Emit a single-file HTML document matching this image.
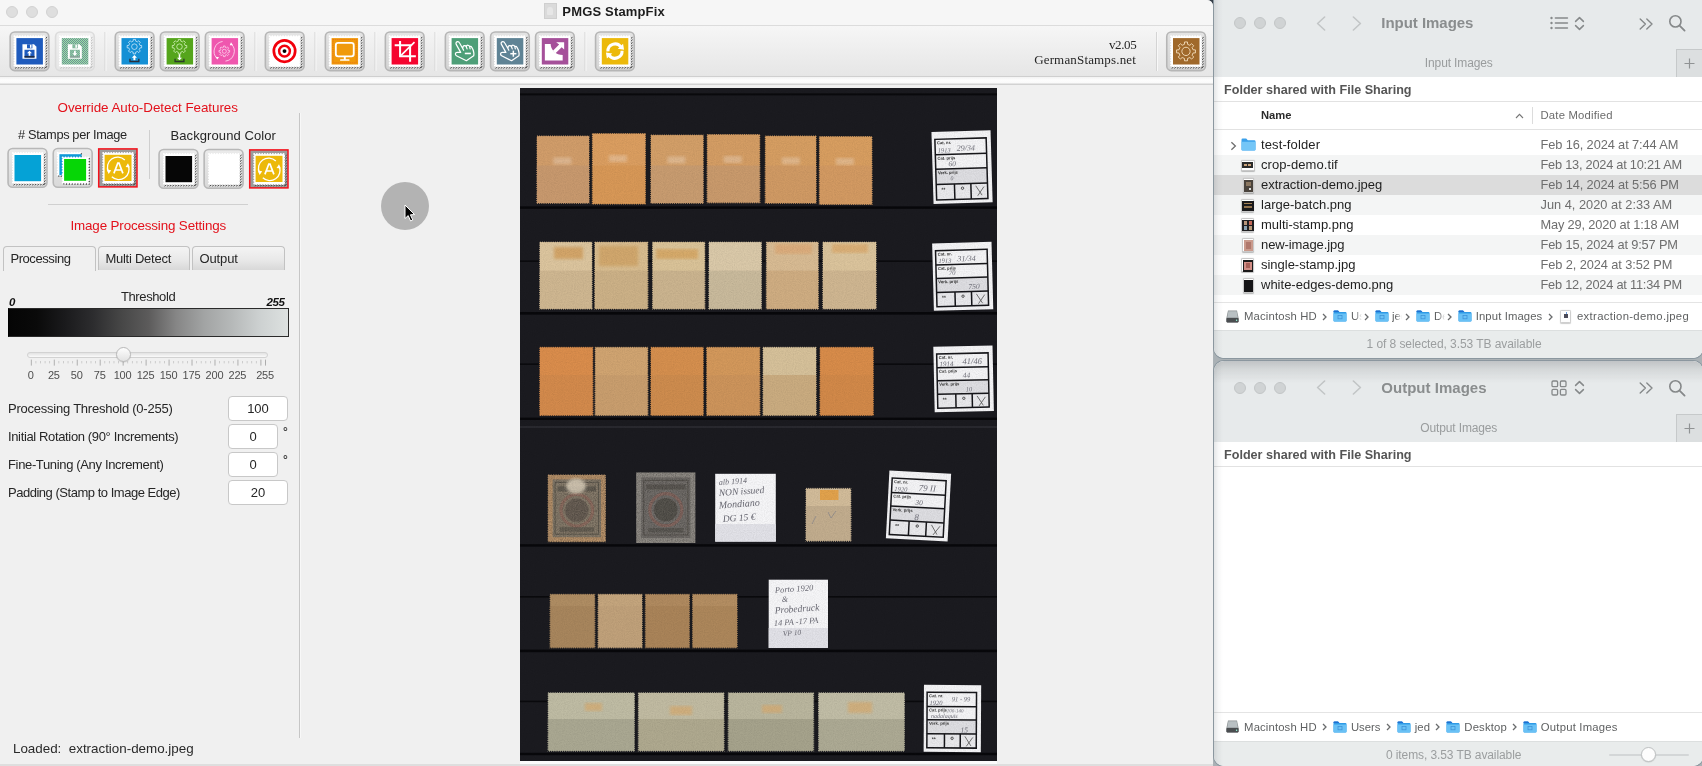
<!DOCTYPE html>
<html>
<head>
<meta charset="utf-8">
<title>PMGS StampFix</title>
<style>
*{box-sizing:border-box;margin:0;padding:0}
html,body{width:1702px;height:766px;overflow:hidden}
body{font-family:"Liberation Sans",sans-serif;font-size:13px;color:#262626;background:#aab1b5;position:relative}
.abs{position:absolute}
.t{position:absolute;white-space:nowrap;line-height:16px}
/* ---------- StampFix window ---------- */
#sf,.fw{will-change:transform}
#sf{position:absolute;left:0;top:0;width:1213px;height:766px;background:#f0f0f0;border-top-right-radius:6px;overflow:hidden}
#sf .titlebar{position:absolute;left:0;top:0;width:100%;height:26px;background:#f6f6f6;border-bottom:1px solid #dcdcdc}
.tl{position:absolute;width:12px;height:12px;border-radius:50%;background:#dedede;border:1px solid #d2d2d2}
#sf .toolbar{position:absolute;left:0;top:26px;width:100%;height:50px;background:linear-gradient(#f6f6f6,#ececec 60%,#e6e6e6)}
#sf .band{position:absolute;left:0;top:76px;width:100%;height:9px;background:linear-gradient(#cfcfcf 0,#cfcfcf 1px,#f2f2f2 1px,#fdfdfd 4px,#fafafa 7px,#d2d2d2 8px,#d2d2d2 9px)}
.tb{position:absolute;top:6px;width:40px;height:40px;border-radius:5px;border:1px solid #bdbdbd;background:linear-gradient(#efefef,#dcdcdc)}
.tb.dis{border-color:#dddddd;background:linear-gradient(#f3f3f3,#e8e8e8)}
.tb svg{position:absolute;left:3px;top:3px}
.sep{position:absolute;top:6px;width:1px;height:40px;background:#d6d6d6;box-shadow:1px 0 0 #fafafa}
.red{color:#e3111b}
.ob{position:absolute;width:40px;height:40px;border-radius:5px;border:1px solid #bdbdbd;background:linear-gradient(#efefef,#dcdcdc)}
.ob.sel{border-radius:0;border:2px solid #e8111b;background:#9a9a9a}
.ob svg{position:absolute;left:3px;top:3px}
.ob.sel svg{left:2px;top:2px}
.tab{position:absolute;top:246px;height:24px;border:1px solid #c2c2c2;border-bottom:none;border-radius:4px 4px 0 0;background:linear-gradient(#f4f4f4,#e9e9e9 55%,#d8d8d8);font-size:13px;line-height:24px;padding-left:6.4px;letter-spacing:-0.2px}
.tab.act{background:#f0f0f0;height:25px}
.inp{position:absolute;left:228px;height:25px;border:1px solid #c8c8c8;border-radius:4px;background:#fff;text-align:center;line-height:23px;font-size:13px}
.lbl{position:absolute;left:8px;white-space:nowrap;font-size:13px;line-height:16px;letter-spacing:-0.25px}
/* ---------- Finder ---------- */
.fw{position:absolute;left:1214px;width:488.6px;background:#fff;border-radius:10px;overflow:hidden;box-shadow:0 0 0 1px #8b979f}
.edge{position:absolute;left:0;top:0;width:9px;height:100%;background:linear-gradient(90deg,rgba(60,70,80,.13),rgba(60,70,80,.04) 50%,rgba(60,70,80,0))}
.fw .ftb{position:absolute;left:0;top:0;width:100%;background:#e7eaeb}
.ftl{position:absolute;width:12px;height:12px;border-radius:50%;background:#d0d3d4;border:1px solid #c3c6c7}
.ftitle{position:absolute;font-weight:bold;font-size:15px;color:#8a8d8e;white-space:nowrap;line-height:18px}
.fgray{color:#8e9192}
.row{position:absolute;left:0;width:100%;height:20px}
.row.alt{background:#f4f5f5}
.row.selr{background:#dcdcdc}
.fn{position:absolute;left:47px;top:2px;font-size:13px;line-height:16px;white-space:nowrap;color:#1f1f1f}
.fd{position:absolute;left:326.5px;top:2px;font-size:12.8px;line-height:16px;white-space:nowrap;color:#6e6e6e}
.pb{position:absolute;font-size:11.3px;color:#5f6162;white-space:nowrap;line-height:14px}
</style>
</head>
<body>
<div class="abs" style="left:1203px;top:0;width:12px;height:10px;background:#343e48"></div>

<!-- ================= StampFix window ================= -->
<div id="sf">
  <div class="titlebar">
    <div class="tl" style="left:6px;top:6px"></div>
    <div class="tl" style="left:26px;top:6px"></div>
    <div class="tl" style="left:46px;top:6px"></div>
    <div class="abs" style="left:544px;top:3.4px;width:13px;height:15.2px;background:#dadada;border:1px solid #cfcfcf"><div class="abs" style="left:2.4px;top:2.6px;width:6px;height:8px;border-radius:3px 3px 1px 1px;background:#e6e6e6"></div></div>
    <div class="t" style="left:562.3px;top:4.1px;font-weight:bold;font-size:13px;color:#1c1c1c;letter-spacing:0.17px">PMGS StampFix</div>
  </div>
  <div class="toolbar" id="toolbar">
    <svg class="abs" style="left:0;top:0" width="1213" height="50" viewBox="0 26 1213 50"><defs><linearGradient id="bg" x1="0" y1="0" x2="0" y2="1"><stop offset="0" stop-color="#e4e4e4"/><stop offset="1" stop-color="#d4d4d4"/></linearGradient><linearGradient id="bgd" x1="0" y1="0" x2="0" y2="1"><stop offset="0" stop-color="#f0f0f0"/><stop offset="1" stop-color="#e6e6e6"/></linearGradient><pattern id="dz" width="2" height="2" patternUnits="userSpaceOnUse" patternTransform="translate(0.1 -0.3)"><rect width="2" height="2" fill="#98e4a5"/><rect width="1" height="1" fill="#708c96"/><rect x="1" y="1" width="1" height="1" fill="#708c96"/></pattern></defs>
<g transform="translate(9.6 31.5)"><rect x="0.55" y="0.55" width="38.7" height="38.6" rx="4.6" fill="url(#bg)" stroke="#b6b6b6" stroke-width="1.6"/><g transform="translate(3.9 3.8)"><path d="M1.60 33.1 l1.9 -1.5 M32.0 3.50 l1.5 -1.9 M4.26 33.1 l1.9 -1.5 M32.0 6.16 l1.5 -1.9 M6.91 33.1 l1.9 -1.5 M32.0 8.81 l1.5 -1.9 M9.57 33.1 l1.9 -1.5 M32.0 11.47 l1.5 -1.9 M12.23 33.1 l1.9 -1.5 M32.0 14.13 l1.5 -1.9 M14.88 33.1 l1.9 -1.5 M32.0 16.79 l1.5 -1.9 M17.54 33.1 l1.9 -1.5 M32.0 19.44 l1.5 -1.9 M20.20 33.1 l1.9 -1.5 M32.0 22.10 l1.5 -1.9 M22.86 33.1 l1.9 -1.5 M32.0 24.76 l1.5 -1.9 M25.51 33.1 l1.9 -1.5 M32.0 27.41 l1.5 -1.9 M28.17 33.1 l1.9 -1.5 M32.0 30.07 l1.5 -1.9 M30.83 33.1 l1.9 -1.5 M32.0 32.73 l1.5 -1.9 " fill="none" stroke="#4a4a4a" stroke-width="1"/><rect x="1" y="1" width="30" height="30" fill="#fff" stroke="#fff" stroke-width="2" stroke-dasharray="0.01 2.657" stroke-linecap="round"/><rect x="2.9" y="2.8" width="26.5" height="26.4" fill="#1f5bbd"/><g transform="translate(15.9 15.9) scale(0.963) translate(-16.7 -16.7)"><path d="M9.5 9.5 H21.5 L24 12 V24.5 H9.5 Z" fill="#fff"/>
<rect x="14.2" y="9.5" width="5.6" height="4.2" fill="#1f5bbd"/><rect x="17.3" y="10" width="1.6" height="3.2" fill="#fff"/>
<rect x="11.6" y="15.2" width="10.4" height="8" fill="#1f5bbd"/>
<rect x="11.6" y="21.6" width="10.4" height="1.8" fill="#1d2a44"/>
<path d="M16.8 16.2 L19.4 18.9 H17.7 V21.3 H15.9 V18.9 H14.2 Z" fill="#fff"/></g></g></g>
<g transform="translate(55 31.5)"><rect x="0.55" y="0.55" width="38.7" height="38.6" rx="4.6" fill="url(#bgd)" stroke="#dcdcdc" stroke-width="1.6"/><g transform="translate(3.9 3.8)"><path d="M1.60 33.1 l1.9 -1.5 M32.0 3.50 l1.5 -1.9 M4.26 33.1 l1.9 -1.5 M32.0 6.16 l1.5 -1.9 M6.91 33.1 l1.9 -1.5 M32.0 8.81 l1.5 -1.9 M9.57 33.1 l1.9 -1.5 M32.0 11.47 l1.5 -1.9 M12.23 33.1 l1.9 -1.5 M32.0 14.13 l1.5 -1.9 M14.88 33.1 l1.9 -1.5 M32.0 16.79 l1.5 -1.9 M17.54 33.1 l1.9 -1.5 M32.0 19.44 l1.5 -1.9 M20.20 33.1 l1.9 -1.5 M32.0 22.10 l1.5 -1.9 M22.86 33.1 l1.9 -1.5 M32.0 24.76 l1.5 -1.9 M25.51 33.1 l1.9 -1.5 M32.0 27.41 l1.5 -1.9 M28.17 33.1 l1.9 -1.5 M32.0 30.07 l1.5 -1.9 M30.83 33.1 l1.9 -1.5 M32.0 32.73 l1.5 -1.9 " fill="none" stroke="#bcbcbc" stroke-width="1"/><rect x="1" y="1" width="30" height="30" fill="#fff" stroke="#fff" stroke-width="2" stroke-dasharray="0.01 2.657" stroke-linecap="round"/><rect x="2.9" y="2.8" width="26.5" height="26.4" fill="url(#dz)"/><g transform="translate(15.9 15.9) scale(0.963) translate(-16.7 -16.7)"><path d="M9.5 9.5 H21.5 L24 12 V24.5 H9.5 Z" fill="#fff"/>
<rect x="14.2" y="9.5" width="5.6" height="4.2" fill="url(#dz)"/><rect x="17.3" y="10" width="1.6" height="3.2" fill="#fff"/>
<rect x="11.6" y="15.2" width="10.4" height="8" fill="url(#dz)"/>
<rect x="11.6" y="21.6" width="10.4" height="1.8" fill="#8aa39a"/>
<path d="M16.8 21.6 L19.4 18.9 H17.7 V16.3 H15.9 V18.9 H14.2 Z" fill="#fff"/></g></g></g>
<g transform="translate(114.7 31.5)"><rect x="0.55" y="0.55" width="38.7" height="38.6" rx="4.6" fill="url(#bg)" stroke="#b6b6b6" stroke-width="1.6"/><g transform="translate(3.9 3.8)"><path d="M1.60 33.1 l1.9 -1.5 M32.0 3.50 l1.5 -1.9 M4.26 33.1 l1.9 -1.5 M32.0 6.16 l1.5 -1.9 M6.91 33.1 l1.9 -1.5 M32.0 8.81 l1.5 -1.9 M9.57 33.1 l1.9 -1.5 M32.0 11.47 l1.5 -1.9 M12.23 33.1 l1.9 -1.5 M32.0 14.13 l1.5 -1.9 M14.88 33.1 l1.9 -1.5 M32.0 16.79 l1.5 -1.9 M17.54 33.1 l1.9 -1.5 M32.0 19.44 l1.5 -1.9 M20.20 33.1 l1.9 -1.5 M32.0 22.10 l1.5 -1.9 M22.86 33.1 l1.9 -1.5 M32.0 24.76 l1.5 -1.9 M25.51 33.1 l1.9 -1.5 M32.0 27.41 l1.5 -1.9 M28.17 33.1 l1.9 -1.5 M32.0 30.07 l1.5 -1.9 M30.83 33.1 l1.9 -1.5 M32.0 32.73 l1.5 -1.9 " fill="none" stroke="#4a4a4a" stroke-width="1"/><rect x="1" y="1" width="30" height="30" fill="#fff" stroke="#fff" stroke-width="2" stroke-dasharray="0.01 2.657" stroke-linecap="round"/><rect x="2.9" y="2.8" width="26.5" height="26.4" fill="#1590d5"/><g transform="translate(15.9 15.9) scale(0.963) translate(-16.7 -16.7)"><path d="M15.31 6.24 L15.41 4.49 L17.79 4.49 L17.89 6.24 L19.76 7.02 L21.07 5.85 L22.75 7.53 L21.58 8.84 L22.36 10.71 L24.11 10.81 L24.11 13.19 L22.36 13.29 L21.58 15.16 L22.75 16.47 L21.07 18.15 L19.76 16.98 L17.89 17.76 L17.79 19.51 L15.41 19.51 L15.31 17.76 L13.44 16.98 L12.13 18.15 L10.45 16.47 L11.62 15.16 L10.84 13.29 L9.09 13.19 L9.09 10.81 L10.84 10.71 L11.62 8.84 L10.45 7.53 L12.13 5.85 L13.44 7.02 Z" fill="none" stroke="#e8f4ff" stroke-width="0.7"/><circle cx="16.6" cy="12" r="2.9" fill="none" stroke="#e8f4ff" stroke-width="0.7"/><path d="M16.6 20.6 L19.3 23.4 H17.6 V26 H15.6 V23.4 H13.9 Z" fill="#fff"/><path d="M12 24.6 V27.4 H21.2 V24.6" fill="none" stroke="#2b2f3a" stroke-width="1.4"/></g></g></g>
<g transform="translate(159.8 31.5)"><rect x="0.55" y="0.55" width="38.7" height="38.6" rx="4.6" fill="url(#bg)" stroke="#b6b6b6" stroke-width="1.6"/><g transform="translate(3.9 3.8)"><path d="M1.60 33.1 l1.9 -1.5 M32.0 3.50 l1.5 -1.9 M4.26 33.1 l1.9 -1.5 M32.0 6.16 l1.5 -1.9 M6.91 33.1 l1.9 -1.5 M32.0 8.81 l1.5 -1.9 M9.57 33.1 l1.9 -1.5 M32.0 11.47 l1.5 -1.9 M12.23 33.1 l1.9 -1.5 M32.0 14.13 l1.5 -1.9 M14.88 33.1 l1.9 -1.5 M32.0 16.79 l1.5 -1.9 M17.54 33.1 l1.9 -1.5 M32.0 19.44 l1.5 -1.9 M20.20 33.1 l1.9 -1.5 M32.0 22.10 l1.5 -1.9 M22.86 33.1 l1.9 -1.5 M32.0 24.76 l1.5 -1.9 M25.51 33.1 l1.9 -1.5 M32.0 27.41 l1.5 -1.9 M28.17 33.1 l1.9 -1.5 M32.0 30.07 l1.5 -1.9 M30.83 33.1 l1.9 -1.5 M32.0 32.73 l1.5 -1.9 " fill="none" stroke="#4a4a4a" stroke-width="1"/><rect x="1" y="1" width="30" height="30" fill="#fff" stroke="#fff" stroke-width="2" stroke-dasharray="0.01 2.657" stroke-linecap="round"/><rect x="2.9" y="2.8" width="26.5" height="26.4" fill="#55a51c"/><g transform="translate(15.9 15.9) scale(0.963) translate(-16.7 -16.7)"><path d="M15.31 6.24 L15.41 4.49 L17.79 4.49 L17.89 6.24 L19.76 7.02 L21.07 5.85 L22.75 7.53 L21.58 8.84 L22.36 10.71 L24.11 10.81 L24.11 13.19 L22.36 13.29 L21.58 15.16 L22.75 16.47 L21.07 18.15 L19.76 16.98 L17.89 17.76 L17.79 19.51 L15.41 19.51 L15.31 17.76 L13.44 16.98 L12.13 18.15 L10.45 16.47 L11.62 15.16 L10.84 13.29 L9.09 13.19 L9.09 10.81 L10.84 10.71 L11.62 8.84 L10.45 7.53 L12.13 5.85 L13.44 7.02 Z" fill="none" stroke="#eaffd8" stroke-width="0.7"/><circle cx="16.6" cy="12" r="2.9" fill="none" stroke="#eaffd8" stroke-width="0.7"/><path d="M16.6 26.2 L19.3 23.4 H17.4 V19.8 H15.8 V23.4 H13.9 Z" fill="#fff"/><path d="M12 24.6 V27.4 H21.2 V24.6" fill="none" stroke="#2b3a2b" stroke-width="1.4"/></g></g></g>
<g transform="translate(204.8 31.5)"><rect x="0.55" y="0.55" width="38.7" height="38.6" rx="4.6" fill="url(#bg)" stroke="#b6b6b6" stroke-width="1.6"/><g transform="translate(3.9 3.8)"><path d="M1.60 33.1 l1.9 -1.5 M32.0 3.50 l1.5 -1.9 M4.26 33.1 l1.9 -1.5 M32.0 6.16 l1.5 -1.9 M6.91 33.1 l1.9 -1.5 M32.0 8.81 l1.5 -1.9 M9.57 33.1 l1.9 -1.5 M32.0 11.47 l1.5 -1.9 M12.23 33.1 l1.9 -1.5 M32.0 14.13 l1.5 -1.9 M14.88 33.1 l1.9 -1.5 M32.0 16.79 l1.5 -1.9 M17.54 33.1 l1.9 -1.5 M32.0 19.44 l1.5 -1.9 M20.20 33.1 l1.9 -1.5 M32.0 22.10 l1.5 -1.9 M22.86 33.1 l1.9 -1.5 M32.0 24.76 l1.5 -1.9 M25.51 33.1 l1.9 -1.5 M32.0 27.41 l1.5 -1.9 M28.17 33.1 l1.9 -1.5 M32.0 30.07 l1.5 -1.9 M30.83 33.1 l1.9 -1.5 M32.0 32.73 l1.5 -1.9 " fill="none" stroke="#4a4a4a" stroke-width="1"/><rect x="1" y="1" width="30" height="30" fill="#fff" stroke="#fff" stroke-width="2" stroke-dasharray="0.01 2.657" stroke-linecap="round"/><rect x="2.9" y="2.8" width="26.5" height="26.4" fill="#ef57ae"/><g transform="translate(15.9 15.9) scale(0.963) translate(-16.7 -16.7)"><path d="M15.48 12.70 L15.52 11.27 L17.28 11.27 L17.32 12.70 L18.65 13.25 L19.69 12.27 L20.93 13.51 L19.95 14.55 L20.50 15.88 L21.93 15.92 L21.93 17.68 L20.50 17.72 L19.95 19.05 L20.93 20.09 L19.69 21.33 L18.65 20.35 L17.32 20.90 L17.28 22.33 L15.52 22.33 L15.48 20.90 L14.15 20.35 L13.11 21.33 L11.87 20.09 L12.85 19.05 L12.30 17.72 L10.87 17.68 L10.87 15.92 L12.30 15.88 L12.85 14.55 L11.87 13.51 L13.11 12.27 L14.15 13.25 Z" fill="none" stroke="#ffe6f6" stroke-width="0.7"/><circle cx="16.4" cy="16.8" r="2.1" fill="none" stroke="#ffe6f6" stroke-width="0.7"/><path d="M14.6 6.6 A10.4 10.4 0 0 0 8.6 24" fill="none" stroke="#ffe6f6" stroke-width="0.8"/><path d="M7.4 22.4 L9 25.4 L11 23 Z" fill="#fff"/><path d="M23.6 9.2 A10.4 10.4 0 0 1 17.6 27" fill="none" stroke="#ffe6f6" stroke-width="0.8"/><path d="M25.4 10.6 L23.4 7.4 L22 10.4 Z" fill="#fff"/></g></g></g>
<g transform="translate(264.8 31.5)"><rect x="0.55" y="0.55" width="38.7" height="38.6" rx="4.6" fill="url(#bg)" stroke="#b6b6b6" stroke-width="1.6"/><g transform="translate(3.9 3.8)"><path d="M1.60 33.1 l1.9 -1.5 M32.0 3.50 l1.5 -1.9 M4.26 33.1 l1.9 -1.5 M32.0 6.16 l1.5 -1.9 M6.91 33.1 l1.9 -1.5 M32.0 8.81 l1.5 -1.9 M9.57 33.1 l1.9 -1.5 M32.0 11.47 l1.5 -1.9 M12.23 33.1 l1.9 -1.5 M32.0 14.13 l1.5 -1.9 M14.88 33.1 l1.9 -1.5 M32.0 16.79 l1.5 -1.9 M17.54 33.1 l1.9 -1.5 M32.0 19.44 l1.5 -1.9 M20.20 33.1 l1.9 -1.5 M32.0 22.10 l1.5 -1.9 M22.86 33.1 l1.9 -1.5 M32.0 24.76 l1.5 -1.9 M25.51 33.1 l1.9 -1.5 M32.0 27.41 l1.5 -1.9 M28.17 33.1 l1.9 -1.5 M32.0 30.07 l1.5 -1.9 M30.83 33.1 l1.9 -1.5 M32.0 32.73 l1.5 -1.9 " fill="none" stroke="#4a4a4a" stroke-width="1"/><rect x="1" y="1" width="30" height="30" fill="#fff" stroke="#fff" stroke-width="2" stroke-dasharray="0.01 2.657" stroke-linecap="round"/><g transform="translate(15.9 15.9) scale(0.963) translate(-16.7 -16.7)"><circle cx="16.6" cy="16.6" r="11.1" fill="none" stroke="#f2000c" stroke-width="2.8"/><circle cx="16.6" cy="16.6" r="5.6" fill="none" stroke="#f2000c" stroke-width="2.6"/><circle cx="16.6" cy="16.6" r="2" fill="#000"/></g></g></g>
<g transform="translate(324.8 31.5)"><rect x="0.55" y="0.55" width="38.7" height="38.6" rx="4.6" fill="url(#bg)" stroke="#b6b6b6" stroke-width="1.6"/><g transform="translate(3.9 3.8)"><path d="M1.60 33.1 l1.9 -1.5 M32.0 3.50 l1.5 -1.9 M4.26 33.1 l1.9 -1.5 M32.0 6.16 l1.5 -1.9 M6.91 33.1 l1.9 -1.5 M32.0 8.81 l1.5 -1.9 M9.57 33.1 l1.9 -1.5 M32.0 11.47 l1.5 -1.9 M12.23 33.1 l1.9 -1.5 M32.0 14.13 l1.5 -1.9 M14.88 33.1 l1.9 -1.5 M32.0 16.79 l1.5 -1.9 M17.54 33.1 l1.9 -1.5 M32.0 19.44 l1.5 -1.9 M20.20 33.1 l1.9 -1.5 M32.0 22.10 l1.5 -1.9 M22.86 33.1 l1.9 -1.5 M32.0 24.76 l1.5 -1.9 M25.51 33.1 l1.9 -1.5 M32.0 27.41 l1.5 -1.9 M28.17 33.1 l1.9 -1.5 M32.0 30.07 l1.5 -1.9 M30.83 33.1 l1.9 -1.5 M32.0 32.73 l1.5 -1.9 " fill="none" stroke="#4a4a4a" stroke-width="1"/><rect x="1" y="1" width="30" height="30" fill="#fff" stroke="#fff" stroke-width="2" stroke-dasharray="0.01 2.657" stroke-linecap="round"/><rect x="2.9" y="2.8" width="26.5" height="26.4" fill="#f09a0b"/><g transform="translate(15.9 15.9) scale(0.963) translate(-16.7 -16.7)"><rect x="4.6" y="4.6" width="24.2" height="24.2" fill="none" stroke="#e8641a" stroke-width="0.8" stroke-dasharray="1 1"/><rect x="7.6" y="8" width="18.6" height="14" rx="2.4" fill="none" stroke="#fff" stroke-width="1.9"/><rect x="15.9" y="22.6" width="2" height="3" fill="#fff"/><rect x="12" y="25" width="9.8" height="1.7" rx="0.6" fill="#fff"/></g></g></g>
<g transform="translate(384.8 31.5)"><rect x="0.55" y="0.55" width="38.7" height="38.6" rx="4.6" fill="url(#bg)" stroke="#b6b6b6" stroke-width="1.6"/><g transform="translate(3.9 3.8)"><path d="M1.60 33.1 l1.9 -1.5 M32.0 3.50 l1.5 -1.9 M4.26 33.1 l1.9 -1.5 M32.0 6.16 l1.5 -1.9 M6.91 33.1 l1.9 -1.5 M32.0 8.81 l1.5 -1.9 M9.57 33.1 l1.9 -1.5 M32.0 11.47 l1.5 -1.9 M12.23 33.1 l1.9 -1.5 M32.0 14.13 l1.5 -1.9 M14.88 33.1 l1.9 -1.5 M32.0 16.79 l1.5 -1.9 M17.54 33.1 l1.9 -1.5 M32.0 19.44 l1.5 -1.9 M20.20 33.1 l1.9 -1.5 M32.0 22.10 l1.5 -1.9 M22.86 33.1 l1.9 -1.5 M32.0 24.76 l1.5 -1.9 M25.51 33.1 l1.9 -1.5 M32.0 27.41 l1.5 -1.9 M28.17 33.1 l1.9 -1.5 M32.0 30.07 l1.5 -1.9 M30.83 33.1 l1.9 -1.5 M32.0 32.73 l1.5 -1.9 " fill="none" stroke="#4a4a4a" stroke-width="1"/><rect x="1" y="1" width="30" height="30" fill="#fff" stroke="#fff" stroke-width="2" stroke-dasharray="0.01 2.657" stroke-linecap="round"/><rect x="2.9" y="2.8" width="26.5" height="26.4" fill="#f5052f"/><g transform="translate(15.9 15.9) scale(0.963) translate(-16.7 -16.7)"><path d="M12 6 V22 H28.4 M6.4 10.6 H22.4 V27.6" fill="none" stroke="#fff" stroke-width="2.1"/><path d="M13 21 L27 7.2" stroke="#fff" stroke-width="1.7"/></g></g></g>
<g transform="translate(444.8 31.5)"><rect x="0.55" y="0.55" width="38.7" height="38.6" rx="4.6" fill="url(#bg)" stroke="#b6b6b6" stroke-width="1.6"/><g transform="translate(3.9 3.8)"><path d="M1.60 33.1 l1.9 -1.5 M32.0 3.50 l1.5 -1.9 M4.26 33.1 l1.9 -1.5 M32.0 6.16 l1.5 -1.9 M6.91 33.1 l1.9 -1.5 M32.0 8.81 l1.5 -1.9 M9.57 33.1 l1.9 -1.5 M32.0 11.47 l1.5 -1.9 M12.23 33.1 l1.9 -1.5 M32.0 14.13 l1.5 -1.9 M14.88 33.1 l1.9 -1.5 M32.0 16.79 l1.5 -1.9 M17.54 33.1 l1.9 -1.5 M32.0 19.44 l1.5 -1.9 M20.20 33.1 l1.9 -1.5 M32.0 22.10 l1.5 -1.9 M22.86 33.1 l1.9 -1.5 M32.0 24.76 l1.5 -1.9 M25.51 33.1 l1.9 -1.5 M32.0 27.41 l1.5 -1.9 M28.17 33.1 l1.9 -1.5 M32.0 30.07 l1.5 -1.9 M30.83 33.1 l1.9 -1.5 M32.0 32.73 l1.5 -1.9 " fill="none" stroke="#4a4a4a" stroke-width="1"/><rect x="1" y="1" width="30" height="30" fill="#fff" stroke="#fff" stroke-width="2" stroke-dasharray="0.01 2.657" stroke-linecap="round"/><rect x="2.9" y="2.8" width="26.5" height="26.4" fill="#4e9f78"/><g transform="translate(15.9 15.9) scale(0.963) translate(-16.7 -16.7)"><g transform="translate(3.2 3.2) scale(1.0227)"><path d="M9.2 14.4 L4.7 6.3 C3.9 4.7 5.0 3.4 6.3 3.5 C7.1 3.6 7.7 4.1 8.1 4.9 L11.3 10.4 C11.3 8.6 11.9 7.7 13.0 7.6 C13.9 7.5 14.6 7.9 14.9 8.6 C15.2 7.5 16.0 7.0 16.9 7.2 C17.7 7.3 18.1 7.9 18.3 8.6 C18.9 8.0 19.9 8.2 20.4 9.0 C21.6 10.8 22.4 13.0 22.6 15.0 C22.7 16.2 22.6 17.2 22.4 17.9 L15.0 22.9 L4.9 17.8 C3.2 16.9 3.6 14.4 5.6 14.4 Z M14.9 8.6 L15.7 10.8 M18.3 8.6 L18.8 10.8 M11.3 10.4 L12.2 12.2" fill="none" stroke="#fff" stroke-width="1.25" stroke-linejoin="round" stroke-linecap="round"/><rect x="13.4" y="14.7" width="6.2" height="1.6" fill="#fff"/></g></g></g></g>
<g transform="translate(490 31.5)"><rect x="0.55" y="0.55" width="38.7" height="38.6" rx="4.6" fill="url(#bg)" stroke="#b6b6b6" stroke-width="1.6"/><g transform="translate(3.9 3.8)"><path d="M1.60 33.1 l1.9 -1.5 M32.0 3.50 l1.5 -1.9 M4.26 33.1 l1.9 -1.5 M32.0 6.16 l1.5 -1.9 M6.91 33.1 l1.9 -1.5 M32.0 8.81 l1.5 -1.9 M9.57 33.1 l1.9 -1.5 M32.0 11.47 l1.5 -1.9 M12.23 33.1 l1.9 -1.5 M32.0 14.13 l1.5 -1.9 M14.88 33.1 l1.9 -1.5 M32.0 16.79 l1.5 -1.9 M17.54 33.1 l1.9 -1.5 M32.0 19.44 l1.5 -1.9 M20.20 33.1 l1.9 -1.5 M32.0 22.10 l1.5 -1.9 M22.86 33.1 l1.9 -1.5 M32.0 24.76 l1.5 -1.9 M25.51 33.1 l1.9 -1.5 M32.0 27.41 l1.5 -1.9 M28.17 33.1 l1.9 -1.5 M32.0 30.07 l1.5 -1.9 M30.83 33.1 l1.9 -1.5 M32.0 32.73 l1.5 -1.9 " fill="none" stroke="#4a4a4a" stroke-width="1"/><rect x="1" y="1" width="30" height="30" fill="#fff" stroke="#fff" stroke-width="2" stroke-dasharray="0.01 2.657" stroke-linecap="round"/><rect x="2.9" y="2.8" width="26.5" height="26.4" fill="#5f8395"/><g transform="translate(15.9 15.9) scale(0.963) translate(-16.7 -16.7)"><g transform="translate(3.2 3.2) scale(1.0227)"><path d="M9.2 14.4 L4.7 6.3 C3.9 4.7 5.0 3.4 6.3 3.5 C7.1 3.6 7.7 4.1 8.1 4.9 L11.3 10.4 C11.3 8.6 11.9 7.7 13.0 7.6 C13.9 7.5 14.6 7.9 14.9 8.6 C15.2 7.5 16.0 7.0 16.9 7.2 C17.7 7.3 18.1 7.9 18.3 8.6 C18.9 8.0 19.9 8.2 20.4 9.0 C21.6 10.8 22.4 13.0 22.6 15.0 C22.7 16.2 22.6 17.2 22.4 17.9 L15.0 22.9 L4.9 17.8 C3.2 16.9 3.6 14.4 5.6 14.4 Z M14.9 8.6 L15.7 10.8 M18.3 8.6 L18.8 10.8 M11.3 10.4 L12.2 12.2" fill="none" stroke="#fff" stroke-width="1.25" stroke-linejoin="round" stroke-linecap="round"/><rect x="13.7" y="15" width="6.2" height="1.5" fill="#fff"/><rect x="16.05" y="12.6" width="1.5" height="6.2" fill="#fff"/></g></g></g></g>
<g transform="translate(535 31.5)"><rect x="0.55" y="0.55" width="38.7" height="38.6" rx="4.6" fill="url(#bg)" stroke="#b6b6b6" stroke-width="1.6"/><g transform="translate(3.9 3.8)"><path d="M1.60 33.1 l1.9 -1.5 M32.0 3.50 l1.5 -1.9 M4.26 33.1 l1.9 -1.5 M32.0 6.16 l1.5 -1.9 M6.91 33.1 l1.9 -1.5 M32.0 8.81 l1.5 -1.9 M9.57 33.1 l1.9 -1.5 M32.0 11.47 l1.5 -1.9 M12.23 33.1 l1.9 -1.5 M32.0 14.13 l1.5 -1.9 M14.88 33.1 l1.9 -1.5 M32.0 16.79 l1.5 -1.9 M17.54 33.1 l1.9 -1.5 M32.0 19.44 l1.5 -1.9 M20.20 33.1 l1.9 -1.5 M32.0 22.10 l1.5 -1.9 M22.86 33.1 l1.9 -1.5 M32.0 24.76 l1.5 -1.9 M25.51 33.1 l1.9 -1.5 M32.0 27.41 l1.5 -1.9 M28.17 33.1 l1.9 -1.5 M32.0 30.07 l1.5 -1.9 M30.83 33.1 l1.9 -1.5 M32.0 32.73 l1.5 -1.9 " fill="none" stroke="#4a4a4a" stroke-width="1"/><rect x="1" y="1" width="30" height="30" fill="#fff" stroke="#fff" stroke-width="2" stroke-dasharray="0.01 2.657" stroke-linecap="round"/><rect x="2.9" y="2.8" width="26.5" height="26.4" fill="#a5509a"/><g transform="translate(15.9 15.9) scale(0.963) translate(-16.7 -16.7)"><g transform="translate(3.2 3.2) scale(1.0227)"><path d="M3.1 5.9 H9.0 A12.2 11.2 0 0 0 21.2 17.0 V22.7 H3.1 Z" fill="#fff"/><path d="M14.6 4.0 H22.7 V11.6 L20.2 9.1 L13.9 15.4 L11.3 12.8 L17.6 6.5 Z" fill="#fff"/></g></g></g></g>
<g transform="translate(595 31.5)"><rect x="0.55" y="0.55" width="38.7" height="38.6" rx="4.6" fill="url(#bg)" stroke="#b6b6b6" stroke-width="1.6"/><g transform="translate(3.9 3.8)"><path d="M1.60 33.1 l1.9 -1.5 M32.0 3.50 l1.5 -1.9 M4.26 33.1 l1.9 -1.5 M32.0 6.16 l1.5 -1.9 M6.91 33.1 l1.9 -1.5 M32.0 8.81 l1.5 -1.9 M9.57 33.1 l1.9 -1.5 M32.0 11.47 l1.5 -1.9 M12.23 33.1 l1.9 -1.5 M32.0 14.13 l1.5 -1.9 M14.88 33.1 l1.9 -1.5 M32.0 16.79 l1.5 -1.9 M17.54 33.1 l1.9 -1.5 M32.0 19.44 l1.5 -1.9 M20.20 33.1 l1.9 -1.5 M32.0 22.10 l1.5 -1.9 M22.86 33.1 l1.9 -1.5 M32.0 24.76 l1.5 -1.9 M25.51 33.1 l1.9 -1.5 M32.0 27.41 l1.5 -1.9 M28.17 33.1 l1.9 -1.5 M32.0 30.07 l1.5 -1.9 M30.83 33.1 l1.9 -1.5 M32.0 32.73 l1.5 -1.9 " fill="none" stroke="#4a4a4a" stroke-width="1"/><rect x="1" y="1" width="30" height="30" fill="#fff" stroke="#fff" stroke-width="2" stroke-dasharray="0.01 2.657" stroke-linecap="round"/><rect x="2.9" y="2.8" width="26.5" height="26.4" fill="#ecb90a"/><g transform="translate(15.9 15.9) scale(0.963) translate(-16.7 -16.7)"><g transform="translate(3.2 3.2) scale(1.0227)"><path d="M6.2 13.4 A7.3 7.3 0 0 1 19.2 8.6" fill="none" stroke="#fff" stroke-width="3.1"/><path d="M20.6 12.8 A7.3 7.3 0 0 1 7.6 17.6" fill="none" stroke="#fff" stroke-width="3.1"/><path d="M16.2 10.6 L22.6 11.8 L21.6 5.6 Z" fill="#fff"/><path d="M10.6 15.6 L4.2 14.4 L5.2 20.6 Z" fill="#fff"/></g></g></g></g>
<g transform="translate(1166.2 31.5)"><rect x="0.55" y="0.55" width="38.7" height="38.6" rx="4.6" fill="url(#bg)" stroke="#b6b6b6" stroke-width="1.6"/><g transform="translate(3.9 3.8)"><path d="M1.60 33.1 l1.9 -1.5 M32.0 3.50 l1.5 -1.9 M4.26 33.1 l1.9 -1.5 M32.0 6.16 l1.5 -1.9 M6.91 33.1 l1.9 -1.5 M32.0 8.81 l1.5 -1.9 M9.57 33.1 l1.9 -1.5 M32.0 11.47 l1.5 -1.9 M12.23 33.1 l1.9 -1.5 M32.0 14.13 l1.5 -1.9 M14.88 33.1 l1.9 -1.5 M32.0 16.79 l1.5 -1.9 M17.54 33.1 l1.9 -1.5 M32.0 19.44 l1.5 -1.9 M20.20 33.1 l1.9 -1.5 M32.0 22.10 l1.5 -1.9 M22.86 33.1 l1.9 -1.5 M32.0 24.76 l1.5 -1.9 M25.51 33.1 l1.9 -1.5 M32.0 27.41 l1.5 -1.9 M28.17 33.1 l1.9 -1.5 M32.0 30.07 l1.5 -1.9 M30.83 33.1 l1.9 -1.5 M32.0 32.73 l1.5 -1.9 " fill="none" stroke="#4a4a4a" stroke-width="1"/><rect x="1" y="1" width="30" height="30" fill="#fff" stroke="#fff" stroke-width="2" stroke-dasharray="0.01 2.657" stroke-linecap="round"/><rect x="2.9" y="2.8" width="26.5" height="26.4" fill="#a0692b"/><g transform="translate(15.9 15.9) scale(0.963) translate(-16.7 -16.7)"><path d="M15.06 9.58 L15.15 7.12 L18.25 7.12 L18.34 9.58 L20.72 10.57 L22.52 8.89 L24.71 11.08 L23.03 12.88 L24.02 15.26 L26.48 15.35 L26.48 18.45 L24.02 18.54 L23.03 20.92 L24.71 22.72 L22.52 24.91 L20.72 23.23 L18.34 24.22 L18.25 26.68 L15.15 26.68 L15.06 24.22 L12.68 23.23 L10.88 24.91 L8.69 22.72 L10.37 20.92 L9.38 18.54 L6.92 18.45 L6.92 15.35 L9.38 15.26 L10.37 12.88 L8.69 11.08 L10.88 8.89 L12.68 10.57 Z" fill="none" stroke="#f7e3c4" stroke-width="0.9" stroke-linejoin="round"/><circle cx="16.7" cy="16.9" r="4.3" fill="none" stroke="#f7e3c4" stroke-width="0.9"/></g></g></g>
<rect x="104.5" y="32" width="1" height="39" fill="#d4d4d4"/><rect x="105.5" y="32" width="1" height="39" fill="#f8f8f8"/>
<rect x="254.5" y="32" width="1" height="39" fill="#d4d4d4"/><rect x="255.5" y="32" width="1" height="39" fill="#f8f8f8"/>
<rect x="314.5" y="32" width="1" height="39" fill="#d4d4d4"/><rect x="315.5" y="32" width="1" height="39" fill="#f8f8f8"/>
<rect x="374.5" y="32" width="1" height="39" fill="#d4d4d4"/><rect x="375.5" y="32" width="1" height="39" fill="#f8f8f8"/>
<rect x="434.5" y="32" width="1" height="39" fill="#d4d4d4"/><rect x="435.5" y="32" width="1" height="39" fill="#f8f8f8"/>
<rect x="584.5" y="32" width="1" height="39" fill="#d4d4d4"/><rect x="585.5" y="32" width="1" height="39" fill="#f8f8f8"/>
<rect x="1156" y="32" width="1" height="39" fill="#d4d4d4"/><rect x="1157" y="32" width="1" height="39" fill="#f8f8f8"/>
</svg>
<div class="t" style="right:76.6px;top:10.5px;font-family:'Liberation Serif',serif;font-size:13px;color:#262626;line-height:15px;letter-spacing:-0.35px">v2.05</div>
<div class="t" style="right:77px;top:26px;font-family:'Liberation Serif',serif;font-size:13px;color:#262626;line-height:15px;letter-spacing:0.16px">GermanStamps.net</div>

  </div>
  <div class="band"></div>

  <!-- left panel -->
  <div id="left">
    <div class="t red" style="left:57.5px;top:99.5px;font-size:13.4px;letter-spacing:-0.04px">Override Auto-Detect Features</div>
<div class="t" style="left:18px;top:126.5px;font-size:12.8px;letter-spacing:-0.36px">#&nbsp;Stamps per Image</div>
<div class="t" style="left:170.5px;top:127.5px;font-size:13px;letter-spacing:0.09px">Background Color</div>
<svg class="abs" style="left:0;top:140px" width="300" height="56" viewBox="0 140 300 56"><defs><linearGradient id="obg" x1="0" y1="0" x2="0" y2="1"><stop offset="0" stop-color="#ebebeb"/><stop offset="1" stop-color="#d9d9d9"/></linearGradient></defs>
<g transform="translate(7.5 148)"><rect x="0.55" y="0.55" width="38.9" height="38.7" rx="4.6" fill="url(#obg)" stroke="#b8b8b8" stroke-width="1.6"/><g transform="translate(4.4 4.1)"><path d="M1.60 33.1 l1.9 -1.5 M32.0 3.50 l1.5 -1.9 M4.26 33.1 l1.9 -1.5 M32.0 6.16 l1.5 -1.9 M6.91 33.1 l1.9 -1.5 M32.0 8.81 l1.5 -1.9 M9.57 33.1 l1.9 -1.5 M32.0 11.47 l1.5 -1.9 M12.23 33.1 l1.9 -1.5 M32.0 14.13 l1.5 -1.9 M14.88 33.1 l1.9 -1.5 M32.0 16.79 l1.5 -1.9 M17.54 33.1 l1.9 -1.5 M32.0 19.44 l1.5 -1.9 M20.20 33.1 l1.9 -1.5 M32.0 22.10 l1.5 -1.9 M22.86 33.1 l1.9 -1.5 M32.0 24.76 l1.5 -1.9 M25.51 33.1 l1.9 -1.5 M32.0 27.41 l1.5 -1.9 M28.17 33.1 l1.9 -1.5 M32.0 30.07 l1.5 -1.9 M30.83 33.1 l1.9 -1.5 M32.0 32.73 l1.5 -1.9 " fill="none" stroke="#4a4a4a" stroke-width="1"/><rect x="1" y="1" width="30" height="30" fill="#fff" stroke="#fff" stroke-width="2" stroke-dasharray="0.01 2.657" stroke-linecap="round"/><rect x="2.6" y="2.9" width="26.6" height="26.2" fill="#05a2d6"/></g></g>
<g transform="translate(52.7 148)"><rect x="0.55" y="0.55" width="38.9" height="38.7" rx="4.6" fill="url(#obg)" stroke="#b8b8b8" stroke-width="1.6"/><g transform="translate(4.4 4.1)"><g transform="translate(-0.4 0)"><rect x="2.1" y="1.7" width="22.4" height="22.4" fill="none" stroke="#484848" stroke-width="1.6" stroke-dasharray="0.01 2.8" stroke-linecap="round"/>
<rect x="1" y="0.6" width="22.4" height="22.4" fill="#fff" stroke="#fff" stroke-width="1.9" stroke-dasharray="0.01 2.8" stroke-linecap="round"/>
<rect x="2.7" y="2.1" width="22.2" height="21" fill="#0f9ad8"/>
<rect x="7.2" y="6.6" width="25.4" height="25.4" fill="none" stroke="#484848" stroke-width="1.6" stroke-dasharray="0.01 2.822" stroke-linecap="round"/>
<rect x="6" y="5.4" width="25.4" height="25.4" fill="#fff" stroke="#fff" stroke-width="2" stroke-dasharray="0.01 2.822" stroke-linecap="round"/>
<rect x="7.4" y="6.9" width="22" height="21.8" fill="#06d606"/></g></g></g>
<g transform="translate(97.8 148)"><rect x="0.9" y="0.9" width="38.3" height="38" fill="#9b9b9b" stroke="#f5111b" stroke-width="1.5"/><g transform="translate(4.4 4.1)"><path d="M1.60 33.1 l1.9 -1.5 M32.0 3.50 l1.5 -1.9 M4.26 33.1 l1.9 -1.5 M32.0 6.16 l1.5 -1.9 M6.91 33.1 l1.9 -1.5 M32.0 8.81 l1.5 -1.9 M9.57 33.1 l1.9 -1.5 M32.0 11.47 l1.5 -1.9 M12.23 33.1 l1.9 -1.5 M32.0 14.13 l1.5 -1.9 M14.88 33.1 l1.9 -1.5 M32.0 16.79 l1.5 -1.9 M17.54 33.1 l1.9 -1.5 M32.0 19.44 l1.5 -1.9 M20.20 33.1 l1.9 -1.5 M32.0 22.10 l1.5 -1.9 M22.86 33.1 l1.9 -1.5 M32.0 24.76 l1.5 -1.9 M25.51 33.1 l1.9 -1.5 M32.0 27.41 l1.5 -1.9 M28.17 33.1 l1.9 -1.5 M32.0 30.07 l1.5 -1.9 M30.83 33.1 l1.9 -1.5 M32.0 32.73 l1.5 -1.9 " fill="none" stroke="#4a4a4a" stroke-width="1"/><rect x="1" y="1" width="30" height="30" fill="#fff" stroke="#fff" stroke-width="2" stroke-dasharray="0.01 2.657" stroke-linecap="round"/><rect x="2.4" y="2.7" width="26.9" height="26.2" fill="#ecb90a"/><g transform="translate(-0.6 -0.7)"><path d="M6.9 20.4 A10.2 10.2 0 0 1 23.2 8.6" fill="none" stroke="#fff" stroke-width="1.3"/><path d="M26.6 14 A10.2 10.2 0 0 1 10.2 25.4" fill="none" stroke="#fff" stroke-width="1.3"/><path d="M5.2 18.2 L7 22.6 L9.6 18.8 Z" fill="#fff"/><path d="M28.3 16.2 L26.4 11.8 L24 15.6 Z" fill="#fff"/><path d="M12.3 22 L16.2 11.6 H17.4 L21.3 22 M13.8 18.6 H19.8" fill="none" stroke="#fff" stroke-width="1.7"/></g></g></g>
<g transform="translate(158.5 149)"><rect x="0.55" y="0.55" width="38.9" height="38.7" rx="4.6" fill="url(#obg)" stroke="#b8b8b8" stroke-width="1.6"/><g transform="translate(4.4 4.1)"><path d="M1.60 33.1 l1.9 -1.5 M32.0 3.50 l1.5 -1.9 M4.26 33.1 l1.9 -1.5 M32.0 6.16 l1.5 -1.9 M6.91 33.1 l1.9 -1.5 M32.0 8.81 l1.5 -1.9 M9.57 33.1 l1.9 -1.5 M32.0 11.47 l1.5 -1.9 M12.23 33.1 l1.9 -1.5 M32.0 14.13 l1.5 -1.9 M14.88 33.1 l1.9 -1.5 M32.0 16.79 l1.5 -1.9 M17.54 33.1 l1.9 -1.5 M32.0 19.44 l1.5 -1.9 M20.20 33.1 l1.9 -1.5 M32.0 22.10 l1.5 -1.9 M22.86 33.1 l1.9 -1.5 M32.0 24.76 l1.5 -1.9 M25.51 33.1 l1.9 -1.5 M32.0 27.41 l1.5 -1.9 M28.17 33.1 l1.9 -1.5 M32.0 30.07 l1.5 -1.9 M30.83 33.1 l1.9 -1.5 M32.0 32.73 l1.5 -1.9 " fill="none" stroke="#4a4a4a" stroke-width="1"/><rect x="1" y="1" width="30" height="30" fill="#fff" stroke="#fff" stroke-width="2" stroke-dasharray="0.01 2.657" stroke-linecap="round"/><rect x="2.6" y="2.9" width="26.6" height="26.2" fill="#060606"/></g></g>
<g transform="translate(203.6 149)"><rect x="0.55" y="0.55" width="38.9" height="38.7" rx="4.6" fill="url(#obg)" stroke="#b8b8b8" stroke-width="1.6"/><g transform="translate(4.4 4.1)"><path d="M1.60 33.1 l1.9 -1.5 M32.0 3.50 l1.5 -1.9 M4.26 33.1 l1.9 -1.5 M32.0 6.16 l1.5 -1.9 M6.91 33.1 l1.9 -1.5 M32.0 8.81 l1.5 -1.9 M9.57 33.1 l1.9 -1.5 M32.0 11.47 l1.5 -1.9 M12.23 33.1 l1.9 -1.5 M32.0 14.13 l1.5 -1.9 M14.88 33.1 l1.9 -1.5 M32.0 16.79 l1.5 -1.9 M17.54 33.1 l1.9 -1.5 M32.0 19.44 l1.5 -1.9 M20.20 33.1 l1.9 -1.5 M32.0 22.10 l1.5 -1.9 M22.86 33.1 l1.9 -1.5 M32.0 24.76 l1.5 -1.9 M25.51 33.1 l1.9 -1.5 M32.0 27.41 l1.5 -1.9 M28.17 33.1 l1.9 -1.5 M32.0 30.07 l1.5 -1.9 M30.83 33.1 l1.9 -1.5 M32.0 32.73 l1.5 -1.9 " fill="none" stroke="#4a4a4a" stroke-width="1"/><rect x="1" y="1" width="30" height="30" fill="#fff" stroke="#fff" stroke-width="2" stroke-dasharray="0.01 2.657" stroke-linecap="round"/><rect x="2.6" y="2.9" width="26.6" height="26.2" fill="#ffffff"/></g></g>
<g transform="translate(248.8 149)"><rect x="0.9" y="0.9" width="38.3" height="38" fill="#9b9b9b" stroke="#f5111b" stroke-width="1.5"/><g transform="translate(4.4 4.1)"><path d="M1.60 33.1 l1.9 -1.5 M32.0 3.50 l1.5 -1.9 M4.26 33.1 l1.9 -1.5 M32.0 6.16 l1.5 -1.9 M6.91 33.1 l1.9 -1.5 M32.0 8.81 l1.5 -1.9 M9.57 33.1 l1.9 -1.5 M32.0 11.47 l1.5 -1.9 M12.23 33.1 l1.9 -1.5 M32.0 14.13 l1.5 -1.9 M14.88 33.1 l1.9 -1.5 M32.0 16.79 l1.5 -1.9 M17.54 33.1 l1.9 -1.5 M32.0 19.44 l1.5 -1.9 M20.20 33.1 l1.9 -1.5 M32.0 22.10 l1.5 -1.9 M22.86 33.1 l1.9 -1.5 M32.0 24.76 l1.5 -1.9 M25.51 33.1 l1.9 -1.5 M32.0 27.41 l1.5 -1.9 M28.17 33.1 l1.9 -1.5 M32.0 30.07 l1.5 -1.9 M30.83 33.1 l1.9 -1.5 M32.0 32.73 l1.5 -1.9 " fill="none" stroke="#4a4a4a" stroke-width="1"/><rect x="1" y="1" width="30" height="30" fill="#fff" stroke="#fff" stroke-width="2" stroke-dasharray="0.01 2.657" stroke-linecap="round"/><rect x="2.4" y="2.7" width="26.9" height="26.2" fill="#ecb90a"/><g transform="translate(-0.6 -0.7)"><path d="M6.9 20.4 A10.2 10.2 0 0 1 23.2 8.6" fill="none" stroke="#fff" stroke-width="1.3"/><path d="M26.6 14 A10.2 10.2 0 0 1 10.2 25.4" fill="none" stroke="#fff" stroke-width="1.3"/><path d="M5.2 18.2 L7 22.6 L9.6 18.8 Z" fill="#fff"/><path d="M28.3 16.2 L26.4 11.8 L24 15.6 Z" fill="#fff"/><path d="M12.3 22 L16.2 11.6 H17.4 L21.3 22 M13.8 18.6 H19.8" fill="none" stroke="#fff" stroke-width="1.7"/></g></g></g>
</svg>
<div class="abs" style="left:149px;top:130px;width:1px;height:49px;background:#cfcfcf"></div>
<div class="abs" style="left:48px;top:204px;width:200px;height:1px;background:#d0d0d0"></div>
<div class="t red" style="left:70.5px;top:218px;font-size:13.4px;letter-spacing:-0.15px">Image Processing Settings</div>
<div class="tab act" style="left:3px;width:93px;letter-spacing:-0.42px">Processing</div>
<div class="tab" style="left:98px;width:92px;letter-spacing:-0.25px">Multi Detect</div>
<div class="tab" style="left:192px;width:93px;letter-spacing:-0.1px">Output</div>
<div class="t" style="left:121px;top:288.5px;font-size:13px;letter-spacing:-0.4px">Threshold</div>
<div class="t" style="left:9px;top:294px;font-size:11.5px;font-weight:bold;font-style:italic;color:#111;letter-spacing:-0.3px">0</div>
<div class="t" style="left:266.5px;top:294px;font-size:11.5px;font-weight:bold;font-style:italic;color:#111;letter-spacing:-0.4px">255</div>
<div class="abs" style="left:8px;top:308px;width:280.5px;height:29px;border:1px solid #2a2a2a;border-left-color:#000;background:linear-gradient(90deg,#050505 0%,#0a0a0a 10%,#1a1a1c 20%,#2c2c2e 30%,#464646 40%,#5c5b5b 50%,#868686 60%,#a2a4a4 70%,#b6b9b9 80%,#cdd1d1 90%,#dde1e0 100%)"></div>
<div class="abs" style="left:27px;top:351.5px;width:241px;height:6px;border-radius:3px;background:linear-gradient(#e2e2e2,#fafafa);border:1px solid #d2d2d2"></div>
<svg class="abs" style="left:0;top:358px" width="300" height="10" viewBox="0 0 300 10"><rect x="30.85" y="1.6" width="0.9" height="6" fill="#a8a8a8"/><rect x="35.49" y="3" width="0.8" height="2.4" fill="#c4c4c4"/><rect x="40.08" y="3" width="0.8" height="2.4" fill="#c4c4c4"/><rect x="44.68" y="3" width="0.8" height="2.4" fill="#c4c4c4"/><rect x="49.27" y="3" width="0.8" height="2.4" fill="#c4c4c4"/><rect x="53.81" y="1.6" width="0.9" height="6" fill="#a8a8a8"/><rect x="58.45" y="3" width="0.8" height="2.4" fill="#c4c4c4"/><rect x="63.04" y="3" width="0.8" height="2.4" fill="#c4c4c4"/><rect x="67.64" y="3" width="0.8" height="2.4" fill="#c4c4c4"/><rect x="72.23" y="3" width="0.8" height="2.4" fill="#c4c4c4"/><rect x="76.77" y="1.6" width="0.9" height="6" fill="#a8a8a8"/><rect x="81.41" y="3" width="0.8" height="2.4" fill="#c4c4c4"/><rect x="86.00" y="3" width="0.8" height="2.4" fill="#c4c4c4"/><rect x="90.60" y="3" width="0.8" height="2.4" fill="#c4c4c4"/><rect x="95.19" y="3" width="0.8" height="2.4" fill="#c4c4c4"/><rect x="99.73" y="1.6" width="0.9" height="6" fill="#a8a8a8"/><rect x="104.37" y="3" width="0.8" height="2.4" fill="#c4c4c4"/><rect x="108.96" y="3" width="0.8" height="2.4" fill="#c4c4c4"/><rect x="113.56" y="3" width="0.8" height="2.4" fill="#c4c4c4"/><rect x="118.15" y="3" width="0.8" height="2.4" fill="#c4c4c4"/><rect x="122.69" y="1.6" width="0.9" height="6" fill="#a8a8a8"/><rect x="127.33" y="3" width="0.8" height="2.4" fill="#c4c4c4"/><rect x="131.92" y="3" width="0.8" height="2.4" fill="#c4c4c4"/><rect x="136.52" y="3" width="0.8" height="2.4" fill="#c4c4c4"/><rect x="141.11" y="3" width="0.8" height="2.4" fill="#c4c4c4"/><rect x="145.65" y="1.6" width="0.9" height="6" fill="#a8a8a8"/><rect x="150.29" y="3" width="0.8" height="2.4" fill="#c4c4c4"/><rect x="154.88" y="3" width="0.8" height="2.4" fill="#c4c4c4"/><rect x="159.48" y="3" width="0.8" height="2.4" fill="#c4c4c4"/><rect x="164.07" y="3" width="0.8" height="2.4" fill="#c4c4c4"/><rect x="168.61" y="1.6" width="0.9" height="6" fill="#a8a8a8"/><rect x="173.25" y="3" width="0.8" height="2.4" fill="#c4c4c4"/><rect x="177.84" y="3" width="0.8" height="2.4" fill="#c4c4c4"/><rect x="182.44" y="3" width="0.8" height="2.4" fill="#c4c4c4"/><rect x="187.03" y="3" width="0.8" height="2.4" fill="#c4c4c4"/><rect x="191.57" y="1.6" width="0.9" height="6" fill="#a8a8a8"/><rect x="196.21" y="3" width="0.8" height="2.4" fill="#c4c4c4"/><rect x="200.80" y="3" width="0.8" height="2.4" fill="#c4c4c4"/><rect x="205.40" y="3" width="0.8" height="2.4" fill="#c4c4c4"/><rect x="209.99" y="3" width="0.8" height="2.4" fill="#c4c4c4"/><rect x="214.53" y="1.6" width="0.9" height="6" fill="#a8a8a8"/><rect x="219.17" y="3" width="0.8" height="2.4" fill="#c4c4c4"/><rect x="223.76" y="3" width="0.8" height="2.4" fill="#c4c4c4"/><rect x="228.36" y="3" width="0.8" height="2.4" fill="#c4c4c4"/><rect x="232.95" y="3" width="0.8" height="2.4" fill="#c4c4c4"/><rect x="237.49" y="1.6" width="0.9" height="6" fill="#a8a8a8"/><rect x="242.13" y="3" width="0.8" height="2.4" fill="#c4c4c4"/><rect x="246.72" y="3" width="0.8" height="2.4" fill="#c4c4c4"/><rect x="251.32" y="3" width="0.8" height="2.4" fill="#c4c4c4"/><rect x="255.91" y="3" width="0.8" height="2.4" fill="#c4c4c4"/><rect x="260.45" y="1.6" width="0.9" height="6" fill="#a8a8a8"/><rect x="265.09" y="3" width="0.8" height="2.4" fill="#c4c4c4"/><rect x="265.04" y="1.6" width="0.9" height="6" fill="#a8a8a8"/></svg>
<div class="abs" style="left:115.5px;top:347px;width:15px;height:15px;border-radius:50%;background:linear-gradient(#fdfdfd,#e2e2e2);border:1px solid #b9b9b9;box-shadow:0 0.5px 1px rgba(0,0,0,.15)"></div>
<div class="t" style="left:10.8px;top:367.5px;width:40px;text-align:center;font-size:11px;color:#4e4e4e;letter-spacing:-0.2px;line-height:14px">0</div>
<div class="t" style="left:33.8px;top:367.5px;width:40px;text-align:center;font-size:11px;color:#4e4e4e;letter-spacing:-0.2px;line-height:14px">25</div>
<div class="t" style="left:56.7px;top:367.5px;width:40px;text-align:center;font-size:11px;color:#4e4e4e;letter-spacing:-0.2px;line-height:14px">50</div>
<div class="t" style="left:79.7px;top:367.5px;width:40px;text-align:center;font-size:11px;color:#4e4e4e;letter-spacing:-0.2px;line-height:14px">75</div>
<div class="t" style="left:102.6px;top:367.5px;width:40px;text-align:center;font-size:11px;color:#4e4e4e;letter-spacing:-0.2px;line-height:14px">100</div>
<div class="t" style="left:125.6px;top:367.5px;width:40px;text-align:center;font-size:11px;color:#4e4e4e;letter-spacing:-0.2px;line-height:14px">125</div>
<div class="t" style="left:148.6px;top:367.5px;width:40px;text-align:center;font-size:11px;color:#4e4e4e;letter-spacing:-0.2px;line-height:14px">150</div>
<div class="t" style="left:171.5px;top:367.5px;width:40px;text-align:center;font-size:11px;color:#4e4e4e;letter-spacing:-0.2px;line-height:14px">175</div>
<div class="t" style="left:194.5px;top:367.5px;width:40px;text-align:center;font-size:11px;color:#4e4e4e;letter-spacing:-0.2px;line-height:14px">200</div>
<div class="t" style="left:217.4px;top:367.5px;width:40px;text-align:center;font-size:11px;color:#4e4e4e;letter-spacing:-0.2px;line-height:14px">225</div>
<div class="t" style="left:245.1px;top:367.5px;width:40px;text-align:center;font-size:11px;color:#4e4e4e;letter-spacing:-0.2px;line-height:14px">255</div>
<div class="lbl" style="top:401px;letter-spacing:-0.23px">Processing Threshold (0-255)</div>
<div class="inp" style="top:395.5px;width:60px">100</div>
<div class="lbl" style="top:429px;letter-spacing:-0.36px">Initial Rotation (90° Increments)</div>
<div class="inp" style="top:423.5px;width:50px">0</div>
<div class="lbl" style="top:457px;letter-spacing:-0.35px">Fine-Tuning (Any Increment)</div>
<div class="inp" style="top:451.5px;width:50px">0</div>
<div class="lbl" style="top:485px;letter-spacing:-0.48px">Padding (Stamp to Image Edge)</div>
<div class="inp" style="top:479.5px;width:60px">20</div>
<div class="t" style="left:283px;top:423.5px;font-size:12px;font-weight:bold;color:#444">°</div>
<div class="t" style="left:283px;top:451.5px;font-size:12px;font-weight:bold;color:#444">°</div>
<div class="abs" style="left:299px;top:113px;width:1px;height:625px;background:#c6c6c6;box-shadow:1px 0 0 #f8f8f8"></div>
<div class="t" style="left:13px;top:741px;font-size:13.4px;color:#2a2a2a;letter-spacing:-0.01px">Loaded:&nbsp; extraction-demo.jpeg</div>

  </div>

  <!-- image -->
  <div id="img" class="abs" style="left:520px;top:88px;width:477px;height:673px;background:#1b1b20;overflow:hidden">
    <svg class="abs" style="left:0;top:0" width="477" height="673" viewBox="0 0 477 673">
<defs><filter id="nz" x="0" y="0" width="100%" height="100%"><feTurbulence type="fractalNoise" baseFrequency="0.9" numOctaves="2" seed="3" result="n"/><feColorMatrix in="n" type="matrix" values="0 0 0 0 0  0 0 0 0 0  0 0 0 0 0  0.9 0.9 0.9 0 -1.05"/></filter><filter id="bl"><feGaussianBlur stdDeviation="0.6"/></filter><filter id="bl2"><feGaussianBlur stdDeviation="1.4"/></filter></defs>
<rect width="477" height="673" fill="#1b1b20"/>
<rect x="0.0" y="5.4" width="477.0" height="2.0" fill="#0a0a0d"/>
<rect x="0.0" y="118.4" width="477.0" height="2.4" fill="#08080b"/>
<rect x="0.0" y="172.4" width="477.0" height="1.6" fill="#0b0b0e"/>
<rect x="0.0" y="224.0" width="477.0" height="2.6" fill="#08080b"/>
<rect x="0.0" y="275.4" width="477.0" height="1.6" fill="#0b0b0e"/>
<rect x="0.0" y="329.6" width="477.0" height="2.4" fill="#08080b"/>
<rect x="0.0" y="338.4" width="477.0" height="1.2" fill="#34343a"/>
<rect x="0.0" y="456.2" width="477.0" height="2.4" fill="#08080b"/>
<rect x="0.0" y="508.0" width="477.0" height="1.6" fill="#0a0a0d"/>
<rect x="0.0" y="561.6" width="477.0" height="2.6" fill="#08080b"/>
<rect x="0.0" y="612.6" width="477.0" height="1.6" fill="#0a0a0d"/>
<rect x="0.0" y="664.8" width="477.0" height="2.4" fill="#08080b"/>
<g><rect x="16.4" y="47.4" width="53.3" height="68.4" fill="#d19d6a"/><rect x="16.4" y="77.5" width="53.3" height="38.3" fill="#c8996e"/><rect x="33.4" y="69.4" width="18.0" height="7.0" fill="#eed8c2" opacity="0.42" filter="url(#bl2)"/><rect x="16.4" y="47.4" width="53.3" height="68.4" fill="none" stroke="#1b1b20" stroke-width="1.5" stroke-dasharray="0.01 2.15" stroke-linecap="round"/></g>
<g><rect x="71.9" y="45.1" width="54.1" height="71.3" fill="#db9e60"/><rect x="71.9" y="77.5" width="54.1" height="38.9" fill="#d89857"/><rect x="88.9" y="67.1" width="18.0" height="7.0" fill="#eed8c2" opacity="0.42" filter="url(#bl2)"/><rect x="71.9" y="45.1" width="54.1" height="71.3" fill="none" stroke="#1b1b20" stroke-width="1.5" stroke-dasharray="0.01 2.15" stroke-linecap="round"/></g>
<g><rect x="130.3" y="46.5" width="53.6" height="69.3" fill="#d39f68"/><rect x="130.3" y="77.5" width="53.6" height="38.3" fill="#c89c70"/><rect x="147.3" y="68.5" width="18.0" height="7.0" fill="#eed8c2" opacity="0.42" filter="url(#bl2)"/><rect x="130.3" y="46.5" width="53.6" height="69.3" fill="none" stroke="#1b1b20" stroke-width="1.5" stroke-dasharray="0.01 2.15" stroke-linecap="round"/></g>
<g><rect x="186.7" y="46.0" width="53.6" height="69.2" fill="#d49d64"/><rect x="186.7" y="77.5" width="53.6" height="37.7" fill="#c99a6c"/><rect x="203.7" y="68.0" width="18.0" height="7.0" fill="#eed8c2" opacity="0.42" filter="url(#bl2)"/><rect x="186.7" y="46.0" width="53.6" height="69.2" fill="none" stroke="#1b1b20" stroke-width="1.5" stroke-dasharray="0.01 2.15" stroke-linecap="round"/></g>
<g><rect x="244.8" y="47.4" width="51.9" height="68.4" fill="#d69e62"/><rect x="244.8" y="77.5" width="51.9" height="38.3" fill="#d09a64"/><rect x="261.8" y="69.4" width="18.0" height="7.0" fill="#eed8c2" opacity="0.42" filter="url(#bl2)"/><rect x="244.8" y="47.4" width="51.9" height="68.4" fill="none" stroke="#1b1b20" stroke-width="1.5" stroke-dasharray="0.01 2.15" stroke-linecap="round"/></g>
<g><rect x="298.9" y="48.0" width="53.6" height="69.0" fill="#d89e60"/><rect x="298.9" y="77.5" width="53.6" height="39.5" fill="#d39a62"/><rect x="315.9" y="70.0" width="18.0" height="7.0" fill="#eed8c2" opacity="0.42" filter="url(#bl2)"/><rect x="298.9" y="48.0" width="53.6" height="69.0" fill="none" stroke="#1b1b20" stroke-width="1.5" stroke-dasharray="0.01 2.15" stroke-linecap="round"/></g>
<g><rect x="19.2" y="153.6" width="53.3" height="67.8" fill="#dcc59e"/><rect x="19.2" y="182.6" width="53.3" height="38.8" fill="#cfb791"/><rect x="34.0" y="159.0" width="29.0" height="12.0" fill="#d2a060" opacity="0.85" filter="url(#bl2)"/><rect x="19.2" y="153.6" width="53.3" height="67.8" fill="none" stroke="#1b1b20" stroke-width="1.5" stroke-dasharray="0.01 2.15" stroke-linecap="round"/></g>
<g><rect x="74.2" y="153.6" width="54.1" height="67.8" fill="#d8bc8f"/><rect x="74.2" y="182.6" width="54.1" height="38.8" fill="#ccb187"/><rect x="79.0" y="158.0" width="39.0" height="20.0" fill="#d0a468" opacity="0.85" filter="url(#bl2)"/><rect x="74.2" y="153.6" width="54.1" height="67.8" fill="none" stroke="#1b1b20" stroke-width="1.5" stroke-dasharray="0.01 2.15" stroke-linecap="round"/></g>
<g><rect x="132.0" y="153.6" width="53.3" height="67.8" fill="#dac398"/><rect x="132.0" y="182.6" width="53.3" height="38.8" fill="#cbb48f"/><rect x="136.0" y="161.0" width="42.0" height="10.0" fill="#d6a664" opacity="0.85" filter="url(#bl2)"/><rect x="132.0" y="153.6" width="53.3" height="67.8" fill="none" stroke="#1b1b20" stroke-width="1.5" stroke-dasharray="0.01 2.15" stroke-linecap="round"/></g>
<g><rect x="188.4" y="153.6" width="53.6" height="67.8" fill="#dac9a9"/><rect x="188.4" y="182.6" width="53.6" height="38.8" fill="#c9ba9c"/><rect x="188.4" y="153.6" width="53.6" height="67.8" fill="none" stroke="#1b1b20" stroke-width="1.5" stroke-dasharray="0.01 2.15" stroke-linecap="round"/></g>
<g><rect x="245.9" y="153.6" width="53.0" height="67.8" fill="#d8bb93"/><rect x="245.9" y="182.6" width="53.0" height="38.8" fill="#cfad82"/><rect x="255.0" y="156.0" width="37.0" height="10.0" fill="#dcaa78" opacity="0.85" filter="url(#bl2)"/><rect x="245.9" y="153.6" width="53.0" height="67.8" fill="none" stroke="#1b1b20" stroke-width="1.5" stroke-dasharray="0.01 2.15" stroke-linecap="round"/></g>
<g><rect x="302.3" y="153.6" width="54.4" height="67.8" fill="#dbc49c"/><rect x="302.3" y="182.6" width="54.4" height="38.8" fill="#cfb691"/><rect x="312.0" y="156.0" width="36.0" height="9.0" fill="#daac70" opacity="0.85" filter="url(#bl2)"/><rect x="302.3" y="153.6" width="54.4" height="67.8" fill="none" stroke="#1b1b20" stroke-width="1.5" stroke-dasharray="0.01 2.15" stroke-linecap="round"/></g>
<g><rect x="19.2" y="258.8" width="54.1" height="69.2" fill="#da8d4c"/><rect x="19.2" y="287.0" width="54.1" height="41.0" fill="#d38a4c"/><rect x="19.2" y="258.8" width="54.1" height="69.2" fill="none" stroke="#1b1b20" stroke-width="1.5" stroke-dasharray="0.01 2.15" stroke-linecap="round"/></g>
<g><rect x="74.7" y="258.8" width="53.6" height="69.2" fill="#d0a471"/><rect x="74.7" y="287.0" width="53.6" height="41.0" fill="#c99e6e"/><rect x="74.7" y="258.8" width="53.6" height="69.2" fill="none" stroke="#1b1b20" stroke-width="1.5" stroke-dasharray="0.01 2.15" stroke-linecap="round"/></g>
<g><rect x="130.3" y="258.8" width="53.6" height="69.2" fill="#d58f4e"/><rect x="130.3" y="287.0" width="53.6" height="41.0" fill="#ce8c4e"/><rect x="130.3" y="258.8" width="53.6" height="69.2" fill="none" stroke="#1b1b20" stroke-width="1.5" stroke-dasharray="0.01 2.15" stroke-linecap="round"/></g>
<g><rect x="186.1" y="258.8" width="54.2" height="69.2" fill="#d3985b"/><rect x="186.1" y="287.0" width="54.2" height="41.0" fill="#cd945b"/><rect x="186.1" y="258.8" width="54.2" height="69.2" fill="none" stroke="#1b1b20" stroke-width="1.5" stroke-dasharray="0.01 2.15" stroke-linecap="round"/></g>
<g><rect x="242.5" y="258.8" width="54.2" height="69.2" fill="#d6c19a"/><rect x="242.5" y="287.0" width="54.2" height="41.0" fill="#caac80"/><rect x="242.5" y="258.8" width="54.2" height="69.2" fill="none" stroke="#1b1b20" stroke-width="1.5" stroke-dasharray="0.01 2.15" stroke-linecap="round"/></g>
<g><rect x="299.5" y="258.8" width="54.4" height="69.2" fill="#d88c4a"/><rect x="299.5" y="287.0" width="54.4" height="41.0" fill="#d28949"/><rect x="299.5" y="258.8" width="54.4" height="69.2" fill="none" stroke="#1b1b20" stroke-width="1.5" stroke-dasharray="0.01 2.15" stroke-linecap="round"/></g>
<g><rect x="27.6" y="386.4" width="58.4" height="67.8" fill="#b6916a"/><rect x="32.6" y="391.4" width="48.4" height="57.8" fill="#857a6a"/><rect x="35.1" y="394.4" width="43.4" height="51.8" fill="none" stroke="#4a463f" stroke-width="1" opacity=".6"/><ellipse cx="56.8" cy="422.3" rx="15.8" ry="15.8" fill="none" stroke="#94645a" stroke-width="3.2" opacity=".55"/><ellipse cx="56.8" cy="422.3" rx="11.7" ry="11.7" fill="#6a6056" filter="url(#bl)"/><rect x="37.6" y="398.4" width="38.4" height="5" fill="#4a4640" opacity=".5"/><rect x="39.6" y="439.2" width="34.4" height="4.5" fill="#4a4640" opacity=".45"/><rect x="27.6" y="386.4" width="58.4" height="67.8" fill="#000" filter="url(#nz)" opacity=".22"/><rect x="27.6" y="386.4" width="58.4" height="67.8" fill="none" stroke="#1b1b20" stroke-width="1.3" stroke-dasharray="0.01 2.4" stroke-linecap="round"/></g>
<ellipse cx="56.0" cy="398.0" rx="10" ry="7.5" fill="#d8ccb8" opacity=".85" filter="url(#bl2)"/>
<g><rect x="116.2" y="384.4" width="59.2" height="70.6" fill="#8e8a84"/><rect x="121.2" y="389.4" width="49.2" height="60.6" fill="#726e6a"/><rect x="123.7" y="392.4" width="44.2" height="54.6" fill="none" stroke="#4a463f" stroke-width="1" opacity=".6"/><ellipse cx="145.8" cy="421.7" rx="16.0" ry="16.0" fill="none" stroke="#94645a" stroke-width="3.2" opacity=".55"/><ellipse cx="145.8" cy="421.7" rx="11.8" ry="11.8" fill="#59544f" filter="url(#bl)"/><rect x="126.2" y="396.4" width="39.2" height="5" fill="#4a4640" opacity=".5"/><rect x="128.2" y="440.0" width="35.2" height="4.5" fill="#4a4640" opacity=".45"/><rect x="116.2" y="384.4" width="59.2" height="70.6" fill="#000" filter="url(#nz)" opacity=".22"/></g>
<g transform="rotate(0 225.5 419.7)"><rect x="195.2" y="385.8" width="60.6" height="67.8" fill="#f6f6f8"/><rect x="195.2" y="436.0" width="60.6" height="17.6" fill="#e2e2e8"/><text x="199.0" y="397.0" font-family="Liberation Serif" font-style="italic" font-size="8" fill="#6a6a74" transform="rotate(-4 199.0 397.0)">alb 1914</text><text x="199.0" y="408.0" font-family="Liberation Serif" font-style="italic" font-size="9.5" fill="#6a6a74" transform="rotate(-4 199.0 408.0)">NON issued</text><text x="199.0" y="420.5" font-family="Liberation Serif" font-style="italic" font-size="10" fill="#6a6a74" transform="rotate(-4 199.0 420.5)">Mondiano</text><text x="203.0" y="434.0" font-family="Liberation Serif" font-style="italic" font-size="9.5" fill="#6a6a74" transform="rotate(-4 203.0 434.0)">DG 15 €</text></g>
<g><rect x="285.4" y="399.9" width="46.0" height="53.7" fill="#d2bc9a"/><rect x="285.4" y="418.0" width="46.0" height="35.6" fill="#c2ad8e"/><rect x="300.0" y="402.0" width="18.5" height="10.0" fill="#e2a24c" opacity="1"/><path d="M292.0 436.0 l4 -8 M308.0 424.0 l3 6 l5 -7" stroke="#8e8a8c" stroke-width=".8" fill="none"/><rect x="285.4" y="399.9" width="46.0" height="53.7" fill="none" stroke="#1b1b20" stroke-width="1.5" stroke-dasharray="0.01 2.15" stroke-linecap="round"/></g>
<g><rect x="29.6" y="505.8" width="45.7" height="54.4" fill="#af8d63"/><rect x="29.6" y="518.0" width="45.7" height="42.2" fill="#a8865d"/><rect x="29.6" y="505.8" width="45.7" height="54.4" fill="none" stroke="#1b1b20" stroke-width="1.5" stroke-dasharray="0.01 2.15" stroke-linecap="round"/></g>
<g><rect x="77.6" y="505.8" width="45.1" height="54.4" fill="#c4a57d"/><rect x="77.6" y="518.0" width="45.1" height="42.2" fill="#c0a17a"/><rect x="77.6" y="505.8" width="45.1" height="54.4" fill="none" stroke="#1b1b20" stroke-width="1.5" stroke-dasharray="0.01 2.15" stroke-linecap="round"/></g>
<g><rect x="124.9" y="505.8" width="45.1" height="54.4" fill="#b08a5f"/><rect x="124.9" y="518.0" width="45.1" height="42.2" fill="#aa8459"/><rect x="124.9" y="505.8" width="45.1" height="54.4" fill="none" stroke="#1b1b20" stroke-width="1.5" stroke-dasharray="0.01 2.15" stroke-linecap="round"/></g>
<g><rect x="172.0" y="505.8" width="45.7" height="54.4" fill="#b48e62"/><rect x="172.0" y="518.0" width="45.7" height="42.2" fill="#ad875b"/><rect x="172.0" y="505.8" width="45.7" height="54.4" fill="none" stroke="#1b1b20" stroke-width="1.5" stroke-dasharray="0.01 2.15" stroke-linecap="round"/></g>
<g transform="rotate(0 278.4 525.9)"><rect x="248.7" y="491.7" width="59.3" height="68.3" fill="#f6f6f8"/><rect x="248.7" y="540.0" width="59.3" height="20.0" fill="#e2e2e8"/><text x="255.0" y="505.0" font-family="Liberation Serif" font-style="italic" font-size="8.5" fill="#6a6a74" transform="rotate(-4 255.0 505.0)">Porto 1920</text><text x="262.0" y="514.0" font-family="Liberation Serif" font-style="italic" font-size="8" fill="#6a6a74" transform="rotate(-4 262.0 514.0)">&amp;</text><text x="255.0" y="525.5" font-family="Liberation Serif" font-style="italic" font-size="9.5" fill="#6a6a74" transform="rotate(-4 255.0 525.5)">Probedruck</text><text x="254.0" y="538.0" font-family="Liberation Serif" font-style="italic" font-size="8.5" fill="#6a6a74" transform="rotate(-4 254.0 538.0)">14 PA -17 PA</text><text x="263.0" y="548.0" font-family="Liberation Serif" font-style="italic" font-size="7.5" fill="#6a6a74" transform="rotate(-4 263.0 548.0)">VP 10</text></g>
<g><rect x="27.6" y="604.2" width="87.4" height="59.3" fill="#bfbca4"/><rect x="27.6" y="631.0" width="87.4" height="32.5" fill="#aaa892"/><rect x="65.0" y="615.0" width="17.0" height="8.0" fill="#d6ac72" opacity="0.75" filter="url(#bl2)"/><rect x="27.6" y="604.2" width="87.4" height="59.3" fill="none" stroke="#1b1b20" stroke-width="1.5" stroke-dasharray="0.01 2.15" stroke-linecap="round"/></g>
<g><rect x="117.9" y="604.2" width="86.6" height="59.3" fill="#c1bba2"/><rect x="117.9" y="631.0" width="86.6" height="32.5" fill="#afa98f"/><rect x="150.0" y="618.0" width="22.0" height="9.0" fill="#d6ac72" opacity="0.75" filter="url(#bl2)"/><rect x="117.9" y="604.2" width="86.6" height="59.3" fill="none" stroke="#1b1b20" stroke-width="1.5" stroke-dasharray="0.01 2.15" stroke-linecap="round"/></g>
<g><rect x="207.8" y="604.2" width="86.3" height="59.3" fill="#bab69e"/><rect x="207.8" y="631.0" width="86.3" height="32.5" fill="#a6a38c"/><rect x="242.0" y="617.0" width="20.0" height="8.0" fill="#d6ac72" opacity="0.75" filter="url(#bl2)"/><rect x="207.8" y="604.2" width="86.3" height="59.3" fill="none" stroke="#1b1b20" stroke-width="1.5" stroke-dasharray="0.01 2.15" stroke-linecap="round"/></g>
<g><rect x="298.0" y="604.2" width="87.0" height="59.3" fill="#c1bda6"/><rect x="298.0" y="631.0" width="87.0" height="32.5" fill="#adaa94"/><rect x="328.0" y="614.0" width="24.0" height="11.0" fill="#d6ac72" opacity="0.75" filter="url(#bl2)"/><rect x="298.0" y="604.2" width="87.0" height="59.3" fill="none" stroke="#1b1b20" stroke-width="1.5" stroke-dasharray="0.01 2.15" stroke-linecap="round"/></g>
<g transform="rotate(-1.7 442.1 79.2)"><rect x="412.5" y="43.2" width="59.1" height="72.0" fill="#f4f4f6"/><rect x="415.7" y="80.6" width="51.3" height="15.2" fill="#dedee2"/><rect x="415.7" y="95.7" width="51.3" height="15.5" fill="#e9e9ec"/><rect x="415.7" y="50.6" width="51.3" height="60.6" fill="none" stroke="#16161a" stroke-width="1.5"/><rect x="415.7" y="65.3" width="51.3" height="1.5" fill="#16161a"/><rect x="415.7" y="79.8" width="51.3" height="1.5" fill="#16161a"/><rect x="415.7" y="95.0" width="51.3" height="1.5" fill="#16161a"/><rect x="433.2" y="95.7" width="1.5" height="15.5" fill="#16161a"/><rect x="449.6" y="95.7" width="1.5" height="15.5" fill="#16161a"/><text x="417.7" y="55.6" font-family="Liberation Sans" font-weight="bold" font-size="4.2" fill="#333">Cat. nr.</text><text x="417.7" y="71.1" font-family="Liberation Sans" font-weight="bold" font-size="4.2" fill="#333">Cat. prijs</text><text x="417.7" y="85.6" font-family="Liberation Sans" font-weight="bold" font-size="4.2" fill="#333">Verk. prijs</text><text x="420.8" y="102.7" font-family="Liberation Sans" font-weight="bold" font-size="5" fill="#333">**</text><circle cx="441.9" cy="100.2" r="1.2" fill="none" stroke="#333" stroke-width=".8"/><path d="M455.2 98.2 l6 9.5 M463.4 99.2 l-6.5 9" stroke="#555" stroke-width=".8"/><text x="418.3" y="63.9" font-family="Liberation Serif" font-style="italic" font-size="6.5" fill="#70707a">1913</text><text x="437.2" y="62.7" font-family="Liberation Serif" font-style="italic" font-size="8" fill="#70707a">29/34</text><text x="428.5" y="77.9" font-family="Liberation Serif" font-style="italic" font-size="7.5" fill="#70707a">60</text><text x="430.1" y="91.8" font-family="Liberation Serif" font-style="italic" font-size="6" fill="#70707a">0</text></g>
<g transform="rotate(-1.5 442.7 188.3)"><rect x="413.0" y="154.6" width="59.4" height="67.4" fill="#f4f4f6"/><rect x="416.2" y="189.7" width="51.6" height="14.0" fill="#dedee2"/><rect x="416.2" y="203.7" width="51.6" height="14.3" fill="#e9e9ec"/><rect x="416.2" y="162.0" width="51.6" height="56.0" fill="none" stroke="#16161a" stroke-width="1.5"/><rect x="416.2" y="175.5" width="51.6" height="1.5" fill="#16161a"/><rect x="416.2" y="189.0" width="51.6" height="1.5" fill="#16161a"/><rect x="416.2" y="203.0" width="51.6" height="1.5" fill="#16161a"/><rect x="433.8" y="203.7" width="1.5" height="14.3" fill="#16161a"/><rect x="450.3" y="203.7" width="1.5" height="14.3" fill="#16161a"/><text x="418.2" y="167.0" font-family="Liberation Sans" font-weight="bold" font-size="4.2" fill="#333">Cat. nr.</text><text x="418.2" y="181.3" font-family="Liberation Sans" font-weight="bold" font-size="4.2" fill="#333">Cat. prijs</text><text x="418.2" y="194.7" font-family="Liberation Sans" font-weight="bold" font-size="4.2" fill="#333">Verk. prijs</text><text x="421.4" y="210.7" font-family="Liberation Sans" font-weight="bold" font-size="5" fill="#333">**</text><circle cx="442.5" cy="208.2" r="1.2" fill="none" stroke="#333" stroke-width=".8"/><path d="M455.9 206.2 l6 9.5 M464.2 207.2 l-6.5 9" stroke="#555" stroke-width=".8"/><text x="418.8" y="174.3" font-family="Liberation Serif" font-style="italic" font-size="6.5" fill="#70707a">1913</text><text x="437.9" y="173.2" font-family="Liberation Serif" font-style="italic" font-size="8" fill="#70707a">31/34</text><text x="429.1" y="186.6" font-family="Liberation Serif" font-style="italic" font-size="6.5" fill="#70707a">70</text><text x="448.2" y="201.2" font-family="Liberation Serif" font-style="italic" font-size="7.5" fill="#70707a">750</text></g>
<g transform="rotate(-1.2 443.6 290.8)"><rect x="414.0" y="258.0" width="59.2" height="65.6" fill="#f4f4f6"/><rect x="417.2" y="292.2" width="51.4" height="13.6" fill="#dedee2"/><rect x="417.2" y="305.8" width="51.4" height="13.8" fill="#e9e9ec"/><rect x="417.2" y="265.4" width="51.4" height="54.2" fill="none" stroke="#16161a" stroke-width="1.5"/><rect x="417.2" y="278.5" width="51.4" height="1.5" fill="#16161a"/><rect x="417.2" y="291.5" width="51.4" height="1.5" fill="#16161a"/><rect x="417.2" y="305.0" width="51.4" height="1.5" fill="#16161a"/><rect x="434.7" y="305.8" width="1.5" height="13.8" fill="#16161a"/><rect x="451.1" y="305.8" width="1.5" height="13.8" fill="#16161a"/><text x="419.2" y="270.4" font-family="Liberation Sans" font-weight="bold" font-size="4.2" fill="#333">Cat. nr.</text><text x="419.2" y="284.2" font-family="Liberation Sans" font-weight="bold" font-size="4.2" fill="#333">Cat. prijs</text><text x="419.2" y="297.2" font-family="Liberation Sans" font-weight="bold" font-size="4.2" fill="#333">Verk. prijs</text><text x="422.3" y="312.8" font-family="Liberation Sans" font-weight="bold" font-size="5" fill="#333">**</text><circle cx="443.4" cy="310.3" r="1.2" fill="none" stroke="#333" stroke-width=".8"/><path d="M456.8 308.3 l6 9.5 M465.0 309.3 l-6.5 9" stroke="#555" stroke-width=".8"/><text x="419.8" y="277.9" font-family="Liberation Serif" font-style="italic" font-size="7" fill="#70707a">1914</text><text x="442.9" y="276.2" font-family="Liberation Serif" font-style="italic" font-size="8.5" fill="#70707a">41/46</text><text x="442.9" y="289.8" font-family="Liberation Serif" font-style="italic" font-size="7.5" fill="#70707a">44</text><text x="445.5" y="303.3" font-family="Liberation Serif" font-style="italic" font-size="6.5" fill="#70707a">10</text></g>
<g transform="rotate(3 398.5 418.0)"><rect x="367.6" y="384.0" width="61.8" height="68.0" fill="#f4f4f6"/><rect x="370.8" y="419.4" width="54.0" height="14.2" fill="#dedee2"/><rect x="370.8" y="433.6" width="54.0" height="14.4" fill="#e9e9ec"/><rect x="370.8" y="391.4" width="54.0" height="56.6" fill="none" stroke="#16161a" stroke-width="1.5"/><rect x="370.8" y="405.1" width="54.0" height="1.5" fill="#16161a"/><rect x="370.8" y="418.7" width="54.0" height="1.5" fill="#16161a"/><rect x="370.8" y="432.8" width="54.0" height="1.5" fill="#16161a"/><rect x="389.2" y="433.6" width="1.5" height="14.4" fill="#16161a"/><rect x="406.5" y="433.6" width="1.5" height="14.4" fill="#16161a"/><text x="372.8" y="396.4" font-family="Liberation Sans" font-weight="bold" font-size="4.2" fill="#333">Cat. nr.</text><text x="372.8" y="410.8" font-family="Liberation Sans" font-weight="bold" font-size="4.2" fill="#333">Cat. prijs</text><text x="372.8" y="424.4" font-family="Liberation Sans" font-weight="bold" font-size="4.2" fill="#333">Verk. prijs</text><text x="376.2" y="440.6" font-family="Liberation Sans" font-weight="bold" font-size="5" fill="#333">**</text><circle cx="398.3" cy="438.1" r="1.2" fill="none" stroke="#333" stroke-width=".8"/><path d="M412.4 436.1 l6 9.5 M421.0 437.1 l-6.5 9" stroke="#555" stroke-width=".8"/><text x="373.5" y="404.4" font-family="Liberation Serif" font-style="italic" font-size="6.5" fill="#70707a">1920</text><text x="397.8" y="402.7" font-family="Liberation Serif" font-style="italic" font-size="9" fill="#70707a">79 II</text><text x="395.1" y="416.9" font-family="Liberation Serif" font-style="italic" font-size="7.5" fill="#70707a">30</text><text x="395.1" y="432.2" font-family="Liberation Serif" font-style="italic" font-size="9" fill="#70707a">8</text></g>
<g transform="rotate(0.3 432.4 630.5)"><rect x="403.8" y="597.0" width="57.2" height="67.0" fill="#f4f4f6"/><rect x="407.0" y="631.9" width="49.4" height="13.9" fill="#dedee2"/><rect x="407.0" y="645.8" width="49.4" height="14.2" fill="#e9e9ec"/><rect x="407.0" y="604.4" width="49.4" height="55.6" fill="none" stroke="#16161a" stroke-width="1.5"/><rect x="407.0" y="617.8" width="49.4" height="1.5" fill="#16161a"/><rect x="407.0" y="631.2" width="49.4" height="1.5" fill="#16161a"/><rect x="407.0" y="645.1" width="49.4" height="1.5" fill="#16161a"/><rect x="423.8" y="645.8" width="1.5" height="14.2" fill="#16161a"/><rect x="439.6" y="645.8" width="1.5" height="14.2" fill="#16161a"/><text x="409.0" y="609.4" font-family="Liberation Sans" font-weight="bold" font-size="4.2" fill="#333">Cat. nr.</text><text x="409.0" y="623.6" font-family="Liberation Sans" font-weight="bold" font-size="4.2" fill="#333">Cat. prijs</text><text x="409.0" y="636.9" font-family="Liberation Sans" font-weight="bold" font-size="4.2" fill="#333">Verk. prijs</text><text x="411.9" y="652.8" font-family="Liberation Sans" font-weight="bold" font-size="5" fill="#333">**</text><circle cx="432.2" cy="650.3" r="1.2" fill="none" stroke="#333" stroke-width=".8"/><path d="M445.0 648.3 l6 9.5 M452.9 649.3 l-6.5 9" stroke="#555" stroke-width=".8"/><text x="409.5" y="617.2" font-family="Liberation Serif" font-style="italic" font-size="6.5" fill="#70707a">1920</text><text x="431.7" y="613.3" font-family="Liberation Serif" font-style="italic" font-size="6.5" fill="#70707a">91 - 99</text><text x="426.8" y="624.4" font-family="Liberation Serif" font-style="italic" font-size="5" fill="#70707a">100-140</text><text x="411.0" y="630.0" font-family="Liberation Serif" font-style="italic" font-size="6" fill="#70707a">nadalaquis</text><text x="440.6" y="644.4" font-family="Liberation Serif" font-style="italic" font-size="7.5" fill="#70707a">15</text></g>
<rect width="477" height="673" fill="#000" filter="url(#nz)" opacity=".07"/>
</svg>

  </div>
  <div class="abs" style="left:520px;top:761px;width:477px;height:3px;background:#fbfbfb"></div>
  <div class="abs" style="left:0;top:764px;width:1213px;height:2px;background:#dedede"></div>

  <!-- cursor highlight -->
  <div class="abs" style="left:381px;top:182px;width:48px;height:48px;border-radius:50%;background:#b3b3b3"></div>
  <svg class="abs" style="left:402.6px;top:203.8px" width="14" height="20" viewBox="0 0 14 20"><path d="M2 1 L2 14.5 L5.2 11.6 L7.6 17 L9.8 16 L7.4 10.8 L11.6 10.6 Z" fill="#000" stroke="#fff" stroke-width="1"/></svg>
</div>

<!-- ================= Finder 1 ================= -->
<div class="fw" id="f1" style="top:-12px;height:370px"><div class="abs" style="left:0;top:12px;width:100%;height:358px">
  <div class="ftb" style="height:77.3px"></div>
<div class="abs" style="left:0;top:0px;width:100%;height:0">
<div class="ftl" style="left:20px;top:17px"></div>
<div class="ftl" style="left:40px;top:17px"></div>
<div class="ftl" style="left:60px;top:17px"></div>
<svg class="abs" style="left:101.5px;top:15.5px" width="10" height="15" viewBox="0 0 10 15"><path d="M8.6 1 L1.6 7.5 L8.6 14" fill="none" stroke="#c2c5c6" stroke-width="1.6" stroke-linecap="round" stroke-linejoin="round"/></svg>
<svg class="abs" style="left:137.5px;top:15.5px" width="10" height="15" viewBox="0 0 10 15"><path d="M1.4 1 L8.4 7.5 L1.4 14" fill="none" stroke="#c2c5c6" stroke-width="1.6" stroke-linecap="round" stroke-linejoin="round"/></svg>
<div class="ftitle" style="left:167.3px;top:14.2px;letter-spacing:-0.034px">Input Images</div>
<svg class="abs" style="left:336px;top:16px" width="19" height="14" viewBox="0 0 19 14"><g fill="#86898a"><circle cx="1.5" cy="2" r="1.2"/><circle cx="1.5" cy="7" r="1.2"/><circle cx="1.5" cy="12" r="1.2"/><rect x="4.6" y="1.2" width="13.6" height="1.6" rx=".8"/><rect x="4.6" y="6.2" width="13.6" height="1.6" rx=".8"/><rect x="4.6" y="11.2" width="13.6" height="1.6" rx=".8"/></g></svg>
<svg class="abs" style="left:360.2px;top:15.5px" width="11" height="15" viewBox="0 0 11 15"><path d="M1.6 5.4 L5.5 1.6 L9.4 5.4 M1.6 9.6 L5.5 13.4 L9.4 9.6" fill="none" stroke="#86898a" stroke-width="1.5" stroke-linecap="round" stroke-linejoin="round"/></svg>
<svg class="abs" style="left:424.5px;top:17.5px" width="15" height="12" viewBox="0 0 15 12"><path d="M1.2 1 L6.4 6 L1.2 11 M7.8 1 L13 6 L7.8 11" fill="none" stroke="#86898a" stroke-width="1.4" stroke-linecap="round" stroke-linejoin="round"/></svg>
<svg class="abs" style="left:453.5px;top:14px" width="18" height="18" viewBox="0 0 18 18"><circle cx="7.4" cy="7.4" r="5.6" fill="none" stroke="#86898a" stroke-width="1.6"/><path d="M11.6 11.6 L16.6 16.6" stroke="#86898a" stroke-width="1.8" stroke-linecap="round"/></svg>
<div class="t fgray" style="left:0;width:489.5px;text-align:center;top:56.3px;font-size:12px;line-height:14px;color:#999c9d;letter-spacing:-0.131px">Input Images</div>
<div class="abs" style="left:462px;top:49px;width:28px;height:28px;background:#dcdfe0;border-left:1px solid #c6c9ca;border-top:1px solid #c6c9ca"></div>
<svg class="abs" style="left:469.7px;top:58px" width="11" height="11" viewBox="0 0 11 11"><path d="M5.5 0.5 V10.5 M0.5 5.5 H10.5" stroke="#909394" stroke-width="1.2"/></svg>
<div class="t" style="left:10px;top:82px;font-size:12.6px;font-weight:bold;color:#555;letter-spacing:0px">Folder shared with File Sharing</div>
<div class="abs" style="left:0;top:101px;width:100%;height:1px;background:#e2e2e2"></div>
</div>
<div class="t" style="left:47px;top:107px;font-size:11.2px;font-weight:bold;color:#2a2a2a;letter-spacing:-0.001px">Name</div>
<svg class="abs" style="left:301px;top:112.5px" width="9" height="6" viewBox="0 0 9 6"><path d="M1 5 L4.5 1.4 L8 5" fill="none" stroke="#777" stroke-width="1.1"/></svg>
<div class="abs" style="left:318px;top:107px;width:1px;height:17px;background:#dcdcdc"></div>
<div class="t" style="left:326.5px;top:107px;font-size:11.3px;color:#6c6c6c;letter-spacing:0.198px">Date Modified</div>
<div class="abs" style="left:0;top:129px;width:100%;height:1px;background:#e2e2e2"></div>
<div class="row" style="top:135px"><svg class="abs" style="left:15.5px;top:5.5px" width="7" height="10" viewBox="0 0 7 10"><path d="M1.4 1.2 L5.4 5 L1.4 8.8" fill="none" stroke="#6e6e6e" stroke-width="1.3"/></svg><svg class="abs" style="left:26.5px;top:3.4px" width="15" height="13" viewBox="0 0 15 13"><path d="M0.5 1.8 Q0.5 0.6 1.7 0.6 H5.2 L6.8 2.2 H13.3 Q14.5 2.2 14.5 3.4 V11.2 Q14.5 12.4 13.3 12.4 H1.7 Q0.5 12.4 0.5 11.2 Z" fill="#3aa0ea"/><path d="M0.5 3.8 H14.5 V11.2 Q14.5 12.4 13.3 12.4 H1.7 Q0.5 12.4 0.5 11.2 Z" fill="#74c6f7"/></svg><span class="fn" style="letter-spacing:0.118px">test-folder</span><span class="fd" style="letter-spacing:-0.104px">Feb 16, 2024 at 7:44 AM</span></div>
<div class="row alt" style="top:155px"><div class="abs" style="left:26.5px;top:4.5px;width:14.5px;height:11px;background:#fff;border:1px solid #c9c9c9;border-radius:1.5px;box-shadow:0 .5px 1px rgba(0,0,0,.25)"><div class="abs" style="left:.8px;top:1.4px;width:11px;height:6px;background:#2b2b2b"></div><div class="abs" style="left:2px;top:3px;width:3.4px;height:2.6px;background:#c9a27a"></div><div class="abs" style="left:6.6px;top:3px;width:3.4px;height:2.6px;background:#c9a27a"></div></div><span class="fn" style="letter-spacing:0.072px">crop-demo.tif</span><span class="fd" style="letter-spacing:-0.242px">Feb 13, 2024 at 10:21 AM</span></div>
<div class="row selr" style="top:175px"><div class="abs" style="left:28.5px;top:3.4px;width:11.4px;height:14.2px;background:#fff;border:1px solid #c9c9c9;border-radius:1.5px;box-shadow:0 .5px 1px rgba(0,0,0,.25)"><div class="abs" style="left:.8px;top:.8px;width:8.6px;height:11.4px;background:#4a433c"></div><div class="abs" style="left:2.2px;top:2.2px;width:5.6px;height:4.6px;background:#8a7660"></div><div class="abs" style="left:5.4px;top:8.4px;width:2.6px;height:2.6px;background:#ddd"></div></div><span class="fn" style="letter-spacing:-0.01px">extraction-demo.jpeg</span><span class="fd" style="letter-spacing:-0.108px">Feb 14, 2024 at 5:56 PM</span></div>
<div class="row alt" style="top:195px"><div class="abs" style="left:26.8px;top:3.6px;width:13.6px;height:13px;background:#fff;border:1px solid #c9c9c9;border-radius:1.5px;box-shadow:0 .5px 1px rgba(0,0,0,.25)"><div class="abs" style="left:.6px;top:1.4px;width:11.2px;height:9.6px;background:#1a1a1c"></div><div class="abs" style="left:2px;top:3px;width:8.4px;height:1.6px;background:#c49a62;opacity:.8"></div><div class="abs" style="left:2px;top:6.6px;width:8.4px;height:1.6px;background:#c49a62;opacity:.7"></div></div><span class="fn" style="letter-spacing:0.017px">large-batch.png</span><span class="fd" style="letter-spacing:0.007px">Jun 4, 2020 at 2:33 AM</span></div>
<div class="row" style="top:215px"><div class="abs" style="left:26.8px;top:3.4px;width:13.6px;height:13.4px;background:#fff;border:1px solid #c9c9c9;border-radius:1.5px;box-shadow:0 .5px 1px rgba(0,0,0,.25)"><div class="abs" style="left:.6px;top:.8px;width:11.2px;height:10.8px;background:#1e1e20"></div><div class="abs" style="left:1.8px;top:2px;width:3.6px;height:3.6px;background:#b89478"></div><div class="abs" style="left:6.8px;top:2px;width:3.6px;height:3.6px;background:#c46a5a"></div><div class="abs" style="left:1.8px;top:7px;width:3.6px;height:3.4px;background:#8aa0b0"></div><div class="abs" style="left:6.8px;top:7px;width:3.6px;height:3.4px;background:#b89a78"></div></div><span class="fn" style="letter-spacing:-0.005px">multi-stamp.png</span><span class="fd" style="letter-spacing:-0.161px">May 29, 2020 at 1:18 AM</span></div>
<div class="row alt" style="top:235px"><div class="abs" style="left:28px;top:3px;width:12px;height:14.4px;background:#fff;border:1px solid #c9c9c9;border-radius:1.5px;box-shadow:0 .5px 1px rgba(0,0,0,.25)"><div class="abs" style="left:.8px;top:.8px;width:9.4px;height:11.6px;background:#c99a8c"></div><div class="abs" style="left:2.6px;top:2.8px;width:5.6px;height:7.4px;background:#b0786c"></div></div><span class="fn" style="letter-spacing:-0.096px">new-image.jpg</span><span class="fd" style="letter-spacing:-0.156px">Feb 15, 2024 at 9:57 PM</span></div>
<div class="row" style="top:255px"><div class="abs" style="left:27px;top:3.4px;width:13px;height:13.8px;background:#fff;border:1px solid #c9c9c9;border-radius:1.5px;box-shadow:0 .5px 1px rgba(0,0,0,.25)"><div class="abs" style="left:.6px;top:.6px;width:10.8px;height:11.6px;background:#1c1a1a"></div><div class="abs" style="left:2.4px;top:2.2px;width:7.2px;height:8.4px;background:#d28e86"></div><div class="abs" style="left:4px;top:4px;width:4px;height:4.8px;background:#a86058"></div></div><span class="fn" style="letter-spacing:-0.016px">single-stamp.jpg</span><span class="fd" style="letter-spacing:-0.09px">Feb 2, 2024 at 3:52 PM</span></div>
<div class="row alt" style="top:275px"><div class="abs" style="left:28.5px;top:3.4px;width:11px;height:14.2px;background:#fff;border:1px solid #c9c9c9;border-radius:1.5px;box-shadow:0 .5px 1px rgba(0,0,0,.25)"><div class="abs" style="left:.8px;top:.8px;width:8.4px;height:11.4px;background:#141416"></div></div><span class="fn" style="letter-spacing:0.003px">white-edges-demo.png</span><span class="fd" style="letter-spacing:-0.232px">Feb 12, 2024 at 11:34 PM</span></div>
<div class="abs" style="left:0;top:302px;width:100%;height:1px;background:#e4e4e4"></div>
<svg class="abs" style="left:12.3px;top:309.9px" width="13" height="13" viewBox="0 0 13 13"><path d="M2 0.6 H11 L12.6 8 V11.6 Q12.6 12.4 11.8 12.4 H1.2 Q0.4 12.4 0.4 11.6 V8 Z" fill="#8b9092"/><path d="M2.4 1.2 H10.6 L11.8 7.6 H1.2 Z" fill="#b9c0c3"/><rect x="0.4" y="8" width="12.2" height="4.4" rx=".8" fill="#4a4d50"/><circle cx="10.6" cy="10.2" r=".7" fill="#9fd"/></svg>
<div class="pb" style="left:30px;top:309.4px;letter-spacing:0.153px;">Macintosh HD</div>
<svg class="abs" style="left:108px;top:312.8px" width="5" height="8" viewBox="0 0 5 8"><path d="M1 1 L4 4 L1 7" fill="none" stroke="#6a6c6d" stroke-width="1.3"/></svg>
<svg class="abs" style="left:119.3px;top:310.4px" width="14" height="12" viewBox="0 0 14 12"><path d="M0.5 1.6 Q0.5 0.5 1.6 0.5 H5 L6.4 1.9 H12.4 Q13.5 1.9 13.5 3 V10.4 Q13.5 11.5 12.4 11.5 H1.6 Q0.5 11.5 0.5 10.4 Z" fill="#2f9ae6"/><path d="M0.5 3.6 H13.5 V10.4 Q13.5 11.5 12.4 11.5 H1.6 Q0.5 11.5 0.5 10.4 Z" fill="#69c1f5"/><path d="M0.5 1.6 Q0.5 0.5 1.6 0.5 H5 L6.4 1.9 H0.5Z" fill="#1f6fd0"/><rect x="5" y="5.6" width="4" height="3.2" fill="none" stroke="#3b8fd6" stroke-width=".7"/></svg>
<div class="pb" style="left:137px;top:309.4px;letter-spacing:0px;-webkit-mask-image:linear-gradient(90deg,#000 40%,transparent 100%);overflow:hidden;width:10.5px">Us</div>
<svg class="abs" style="left:149.5px;top:312.8px" width="5" height="8" viewBox="0 0 5 8"><path d="M1 1 L4 4 L1 7" fill="none" stroke="#6a6c6d" stroke-width="1.3"/></svg>
<svg class="abs" style="left:160.5px;top:310.4px" width="14" height="12" viewBox="0 0 14 12"><path d="M0.5 1.6 Q0.5 0.5 1.6 0.5 H5 L6.4 1.9 H12.4 Q13.5 1.9 13.5 3 V10.4 Q13.5 11.5 12.4 11.5 H1.6 Q0.5 11.5 0.5 10.4 Z" fill="#2f9ae6"/><path d="M0.5 3.6 H13.5 V10.4 Q13.5 11.5 12.4 11.5 H1.6 Q0.5 11.5 0.5 10.4 Z" fill="#69c1f5"/><path d="M0.5 1.6 Q0.5 0.5 1.6 0.5 H5 L6.4 1.9 H0.5Z" fill="#1f6fd0"/><rect x="5" y="5.6" width="4" height="3.2" fill="none" stroke="#3b8fd6" stroke-width=".7"/></svg>
<div class="pb" style="left:178px;top:309.4px;letter-spacing:0px;-webkit-mask-image:linear-gradient(90deg,#000 40%,transparent 100%);overflow:hidden;width:9.5px">jed</div>
<svg class="abs" style="left:191px;top:312.8px" width="5" height="8" viewBox="0 0 5 8"><path d="M1 1 L4 4 L1 7" fill="none" stroke="#6a6c6d" stroke-width="1.3"/></svg>
<svg class="abs" style="left:202px;top:310.4px" width="14" height="12" viewBox="0 0 14 12"><path d="M0.5 1.6 Q0.5 0.5 1.6 0.5 H5 L6.4 1.9 H12.4 Q13.5 1.9 13.5 3 V10.4 Q13.5 11.5 12.4 11.5 H1.6 Q0.5 11.5 0.5 10.4 Z" fill="#2f9ae6"/><path d="M0.5 3.6 H13.5 V10.4 Q13.5 11.5 12.4 11.5 H1.6 Q0.5 11.5 0.5 10.4 Z" fill="#69c1f5"/><path d="M0.5 1.6 Q0.5 0.5 1.6 0.5 H5 L6.4 1.9 H0.5Z" fill="#1f6fd0"/><rect x="5" y="5.6" width="4" height="3.2" fill="none" stroke="#3b8fd6" stroke-width=".7"/></svg>
<div class="pb" style="left:220px;top:309.4px;letter-spacing:0px;-webkit-mask-image:linear-gradient(90deg,#000 40%,transparent 100%);overflow:hidden;width:10.5px">De</div>
<svg class="abs" style="left:233px;top:312.8px" width="5" height="8" viewBox="0 0 5 8"><path d="M1 1 L4 4 L1 7" fill="none" stroke="#6a6c6d" stroke-width="1.3"/></svg>
<svg class="abs" style="left:244px;top:310.4px" width="14" height="12" viewBox="0 0 14 12"><path d="M0.5 1.6 Q0.5 0.5 1.6 0.5 H5 L6.4 1.9 H12.4 Q13.5 1.9 13.5 3 V10.4 Q13.5 11.5 12.4 11.5 H1.6 Q0.5 11.5 0.5 10.4 Z" fill="#2f9ae6"/><path d="M0.5 3.6 H13.5 V10.4 Q13.5 11.5 12.4 11.5 H1.6 Q0.5 11.5 0.5 10.4 Z" fill="#69c1f5"/><path d="M0.5 1.6 Q0.5 0.5 1.6 0.5 H5 L6.4 1.9 H0.5Z" fill="#1f6fd0"/><rect x="5" y="5.6" width="4" height="3.2" fill="none" stroke="#3b8fd6" stroke-width=".7"/></svg>
<div class="pb" style="left:261.7px;top:309.4px;letter-spacing:0.114px;">Input Images</div>
<svg class="abs" style="left:333.6px;top:312.8px" width="5" height="8" viewBox="0 0 5 8"><path d="M1 1 L4 4 L1 7" fill="none" stroke="#6a6c6d" stroke-width="1.3"/></svg>
<div class="abs" style="left:346.4px;top:310px;width:10.4px;height:12.8px;background:#fdfdfd;border:1px solid #cfcfcf;border-radius:1.5px;box-shadow:0 .5px 1px rgba(0,0,0,.2)"><div class="abs" style="left:2.4px;top:3px;width:4px;height:4.4px;background:#4a4a58"></div><div class="abs" style="left:4.4px;top:1.4px;width:1.6px;height:1.6px;background:#6a9ad8"></div></div>
<div class="pb" style="left:363px;top:309.4px;letter-spacing:0.329px;">extraction-demo.jpeg</div>
<div class="abs" style="left:0;top:330px;width:100%;height:30px;background:#e9ecec;border-top:1px solid #dcdfdf"></div>
<div class="t" style="left:0;width:480px;text-align:center;top:337.2px;font-size:12px;line-height:14px;color:#9b9e9f;letter-spacing:-0.066px">1 of 8 selected, 3.53 TB available</div>

</div><div class="edge"></div></div>

<!-- ================= Finder 2 ================= -->
<div class="fw" id="f2" style="top:360.5px;height:404.5px">
  <div class="ftb" style="height:80.9px"></div>
<div class="abs" style="left:0;top:3.6px;width:100%;height:0">
<div class="ftl" style="left:20px;top:17px"></div>
<div class="ftl" style="left:40px;top:17px"></div>
<div class="ftl" style="left:60px;top:17px"></div>
<svg class="abs" style="left:101.5px;top:15.5px" width="10" height="15" viewBox="0 0 10 15"><path d="M8.6 1 L1.6 7.5 L8.6 14" fill="none" stroke="#c2c5c6" stroke-width="1.6" stroke-linecap="round" stroke-linejoin="round"/></svg>
<svg class="abs" style="left:137.5px;top:15.5px" width="10" height="15" viewBox="0 0 10 15"><path d="M1.4 1 L8.4 7.5 L1.4 14" fill="none" stroke="#c2c5c6" stroke-width="1.6" stroke-linecap="round" stroke-linejoin="round"/></svg>
<div class="ftitle" style="left:167.3px;top:14.2px;letter-spacing:0.022px">Output Images</div>
<svg class="abs" style="left:336.5px;top:15.5px" width="16" height="16" viewBox="0 0 16 16"><g fill="none" stroke="#86898a" stroke-width="1.3"><rect x="1" y="1" width="5.6" height="5.6" rx="1.2"/><rect x="9.4" y="1" width="5.6" height="5.6" rx="1.2"/><rect x="1" y="9.4" width="5.6" height="5.6" rx="1.2"/><rect x="9.4" y="9.4" width="5.6" height="5.6" rx="1.2"/></g></svg>
<svg class="abs" style="left:360.2px;top:15.5px" width="11" height="15" viewBox="0 0 11 15"><path d="M1.6 5.4 L5.5 1.6 L9.4 5.4 M1.6 9.6 L5.5 13.4 L9.4 9.6" fill="none" stroke="#86898a" stroke-width="1.5" stroke-linecap="round" stroke-linejoin="round"/></svg>
<svg class="abs" style="left:424.5px;top:17.5px" width="15" height="12" viewBox="0 0 15 12"><path d="M1.2 1 L6.4 6 L1.2 11 M7.8 1 L13 6 L7.8 11" fill="none" stroke="#86898a" stroke-width="1.4" stroke-linecap="round" stroke-linejoin="round"/></svg>
<svg class="abs" style="left:453.5px;top:14px" width="18" height="18" viewBox="0 0 18 18"><circle cx="7.4" cy="7.4" r="5.6" fill="none" stroke="#86898a" stroke-width="1.6"/><path d="M11.6 11.6 L16.6 16.6" stroke="#86898a" stroke-width="1.8" stroke-linecap="round"/></svg>
<div class="t fgray" style="left:0;width:489.5px;text-align:center;top:56.3px;font-size:12px;line-height:14px;color:#999c9d;letter-spacing:-0.139px">Output Images</div>
<div class="abs" style="left:462px;top:49px;width:28px;height:28px;background:#dcdfe0;border-left:1px solid #c6c9ca;border-top:1px solid #c6c9ca"></div>
<svg class="abs" style="left:469.7px;top:58px" width="11" height="11" viewBox="0 0 11 11"><path d="M5.5 0.5 V10.5 M0.5 5.5 H10.5" stroke="#909394" stroke-width="1.2"/></svg>
<div class="t" style="left:10px;top:82px;font-size:12.6px;font-weight:bold;color:#555;letter-spacing:0px">Folder shared with File Sharing</div>
<div class="abs" style="left:0;top:101px;width:100%;height:1px;background:#e2e2e2"></div>
</div>
<div class="abs" style="left:0;top:351px;width:100%;height:1px;background:#e4e4e4"></div>
<svg class="abs" style="left:12.2px;top:359.3px" width="13" height="13" viewBox="0 0 13 13"><path d="M2 0.6 H11 L12.6 8 V11.6 Q12.6 12.4 11.8 12.4 H1.2 Q0.4 12.4 0.4 11.6 V8 Z" fill="#8b9092"/><path d="M2.4 1.2 H10.6 L11.8 7.6 H1.2 Z" fill="#b9c0c3"/><rect x="0.4" y="8" width="12.2" height="4.4" rx=".8" fill="#4a4d50"/><circle cx="10.6" cy="10.2" r=".7" fill="#9fd"/></svg>
<div class="pb" style="left:30.1px;top:358.8px;letter-spacing:0.137px;">Macintosh HD</div>
<svg class="abs" style="left:108px;top:362.2px" width="5" height="8" viewBox="0 0 5 8"><path d="M1 1 L4 4 L1 7" fill="none" stroke="#6a6c6d" stroke-width="1.3"/></svg>
<svg class="abs" style="left:119.3px;top:359.8px" width="14" height="12" viewBox="0 0 14 12"><path d="M0.5 1.6 Q0.5 0.5 1.6 0.5 H5 L6.4 1.9 H12.4 Q13.5 1.9 13.5 3 V10.4 Q13.5 11.5 12.4 11.5 H1.6 Q0.5 11.5 0.5 10.4 Z" fill="#2f9ae6"/><path d="M0.5 3.6 H13.5 V10.4 Q13.5 11.5 12.4 11.5 H1.6 Q0.5 11.5 0.5 10.4 Z" fill="#69c1f5"/><path d="M0.5 1.6 Q0.5 0.5 1.6 0.5 H5 L6.4 1.9 H0.5Z" fill="#1f6fd0"/><rect x="5" y="5.6" width="4" height="3.2" fill="none" stroke="#3b8fd6" stroke-width=".7"/></svg>
<div class="pb" style="left:137px;top:358.8px;letter-spacing:-0.042px;">Users</div>
<svg class="abs" style="left:171.8px;top:362.2px" width="5" height="8" viewBox="0 0 5 8"><path d="M1 1 L4 4 L1 7" fill="none" stroke="#6a6c6d" stroke-width="1.3"/></svg>
<svg class="abs" style="left:183.2px;top:359.8px" width="14" height="12" viewBox="0 0 14 12"><path d="M0.5 1.6 Q0.5 0.5 1.6 0.5 H5 L6.4 1.9 H12.4 Q13.5 1.9 13.5 3 V10.4 Q13.5 11.5 12.4 11.5 H1.6 Q0.5 11.5 0.5 10.4 Z" fill="#2f9ae6"/><path d="M0.5 3.6 H13.5 V10.4 Q13.5 11.5 12.4 11.5 H1.6 Q0.5 11.5 0.5 10.4 Z" fill="#69c1f5"/><path d="M0.5 1.6 Q0.5 0.5 1.6 0.5 H5 L6.4 1.9 H0.5Z" fill="#1f6fd0"/><rect x="5" y="5.6" width="4" height="3.2" fill="none" stroke="#3b8fd6" stroke-width=".7"/></svg>
<div class="pb" style="left:200.7px;top:358.8px;letter-spacing:0.14px;">jed</div>
<svg class="abs" style="left:221px;top:362.2px" width="5" height="8" viewBox="0 0 5 8"><path d="M1 1 L4 4 L1 7" fill="none" stroke="#6a6c6d" stroke-width="1.3"/></svg>
<svg class="abs" style="left:232.2px;top:359.8px" width="14" height="12" viewBox="0 0 14 12"><path d="M0.5 1.6 Q0.5 0.5 1.6 0.5 H5 L6.4 1.9 H12.4 Q13.5 1.9 13.5 3 V10.4 Q13.5 11.5 12.4 11.5 H1.6 Q0.5 11.5 0.5 10.4 Z" fill="#2f9ae6"/><path d="M0.5 3.6 H13.5 V10.4 Q13.5 11.5 12.4 11.5 H1.6 Q0.5 11.5 0.5 10.4 Z" fill="#69c1f5"/><path d="M0.5 1.6 Q0.5 0.5 1.6 0.5 H5 L6.4 1.9 H0.5Z" fill="#1f6fd0"/><rect x="5" y="5.6" width="4" height="3.2" fill="none" stroke="#3b8fd6" stroke-width=".7"/></svg>
<div class="pb" style="left:250.3px;top:358.8px;letter-spacing:0.178px;">Desktop</div>
<svg class="abs" style="left:298px;top:362.2px" width="5" height="8" viewBox="0 0 5 8"><path d="M1 1 L4 4 L1 7" fill="none" stroke="#6a6c6d" stroke-width="1.3"/></svg>
<svg class="abs" style="left:309px;top:359.8px" width="14" height="12" viewBox="0 0 14 12"><path d="M0.5 1.6 Q0.5 0.5 1.6 0.5 H5 L6.4 1.9 H12.4 Q13.5 1.9 13.5 3 V10.4 Q13.5 11.5 12.4 11.5 H1.6 Q0.5 11.5 0.5 10.4 Z" fill="#2f9ae6"/><path d="M0.5 3.6 H13.5 V10.4 Q13.5 11.5 12.4 11.5 H1.6 Q0.5 11.5 0.5 10.4 Z" fill="#69c1f5"/><path d="M0.5 1.6 Q0.5 0.5 1.6 0.5 H5 L6.4 1.9 H0.5Z" fill="#1f6fd0"/><rect x="5" y="5.6" width="4" height="3.2" fill="none" stroke="#3b8fd6" stroke-width=".7"/></svg>
<div class="pb" style="left:326.8px;top:358.8px;letter-spacing:0.214px;">Output Images</div>
<div class="abs" style="left:0;top:379.5px;width:100%;height:40px;background:#e9ecec;border-top:1px solid #dcdfdf"></div>
<div class="t" style="left:0;width:479.3px;text-align:center;top:386.5px;font-size:12px;line-height:14px;color:#9b9e9f;letter-spacing:-0.098px">0 items, 3.53 TB available</div>
<div class="abs" style="left:395px;top:392.5px;width:80px;height:2.4px;border-radius:1.2px;background:#d3d6d7"></div>
<div class="abs" style="left:426.5px;top:386px;width:15px;height:15px;border-radius:50%;background:#fdfdfd;border:1px solid #bfc2c3;box-shadow:0 .5px 1px rgba(0,0,0,.15)"></div>

<div class="edge"></div><div class="abs" style="left:0;top:0;width:100%;height:22px;background:linear-gradient(rgba(40,44,48,.2),rgba(40,44,48,.09) 40%,rgba(40,44,48,0))"></div></div>

</body>
</html>
